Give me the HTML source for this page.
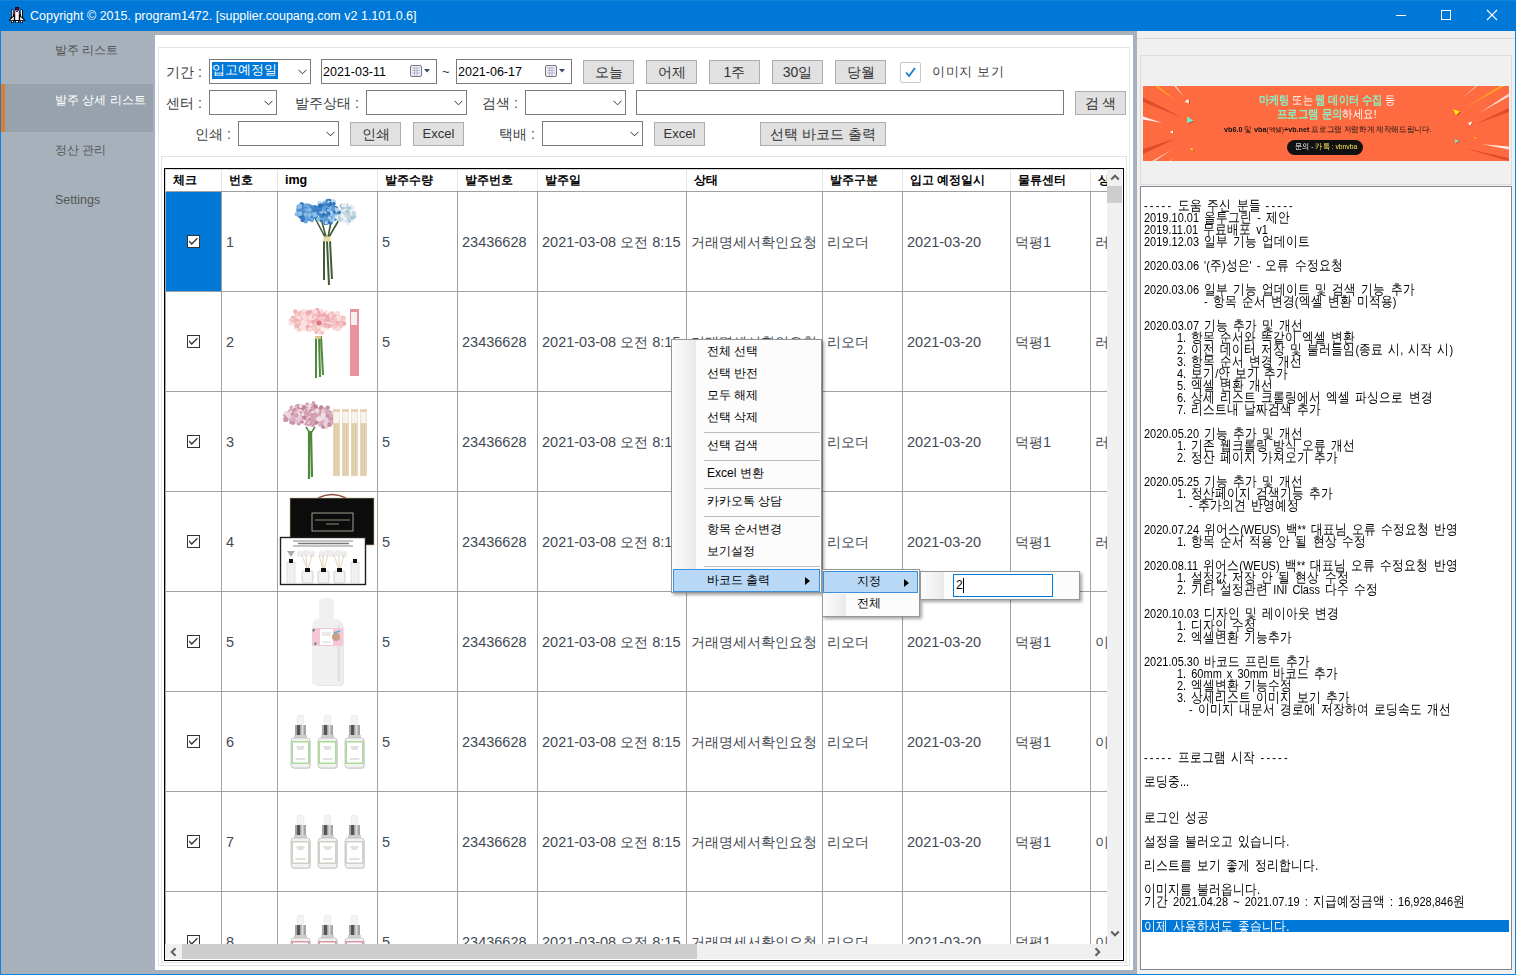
<!DOCTYPE html><html lang="ko"><head><meta charset="utf-8"><style>
*{margin:0;padding:0;box-sizing:border-box}
html,body{width:1516px;height:975px;overflow:hidden;background:#a7b1bb}
body{position:relative;font-family:"Liberation Sans",sans-serif;font-size:14px;color:#222}
body div{position:absolute}
.t{white-space:pre;line-height:1}
.btn{background:#e1e1e1;border:1px solid #adadad;color:#333;text-align:center}
.cmb{background:#fff;border:1px solid #7a7a7a}
.chev{width:7px;height:7px;border-right:1px solid #444;border-bottom:1px solid #444;transform:rotate(45deg)}
</style></head><body>
<div style="left:0px;top:0px;width:1516px;height:31px;background:#0078d7"></div>
<div style="left:0px;top:0px;width:1516px;height:1px;background:#1281d8"></div>
<div style="left:0px;top:31px;width:1px;height:944px;background:#1281d8"></div>
<div style="left:1515px;top:31px;width:1px;height:944px;background:#1281d8"></div>
<div style="left:0px;top:974px;width:1516px;height:1px;background:#1281d8"></div>
<svg style="position:absolute;left:6px;top:4px" width="22" height="22" viewBox="6 4 22 22">
<path d="M9 20.5L11 17V9.5h2.2V14H15V8h4v6h1.8V9.5H23V17l2 3.5V21H9z" fill="#000"/>
<rect x="15" y="7" width="4" height="3" fill="#000"/>
<rect x="15.5" y="8" width="3" height="1.6" fill="#8b0000"/>
<rect x="11.8" y="10" width="1" height="6.5" fill="#fff"/>
<rect x="21" y="10" width="1" height="6.5" fill="#fff"/>
<rect x="14" y="11" width="1" height="4" fill="#a00000"/>
<rect x="19" y="11" width="1" height="4" fill="#a00000"/>
<path d="M15.2 10.5h3.6V20h-3.6z" fill="#fff"/>
<rect x="16" y="11" width="2" height="0.9" fill="#1010e0"/>
<path d="M10 20.2L13.8 16.5V20.2z" fill="#fff"/>
<path d="M24 20.2L20.2 16.5V20.2z" fill="#fff"/>
<rect x="11" y="20.5" width="3" height="2.5" fill="#000"/><rect x="11.8" y="21" width="1.4" height="1.3" fill="#fff"/>
<rect x="15.3" y="20.5" width="3.4" height="2.5" fill="#000"/><rect x="16" y="21" width="2" height="1.3" fill="#fff"/>
<rect x="20" y="20.5" width="3" height="2.5" fill="#000"/><rect x="20.8" y="21" width="1.4" height="1.3" fill="#fff"/>
</svg>
<div class="t" style="left:30px;top:10px;color:#fff;font-size:12.5px">Copyright © 2015. program1472. [supplier.coupang.com v2 1.101.0.6]</div>
<div style="left:1396px;top:15px;width:10px;height:1px;background:#fff"></div>
<div style="left:1441px;top:10px;width:10px;height:10px;border:1px solid #fff"></div>
<svg style="position:absolute;left:1486px;top:9px" width="12" height="12" viewBox="0 0 12 12"><path d="M1 1L11 11M11 1L1 11" stroke="#fff" stroke-width="1.1"/></svg>
<div style="left:1px;top:84px;width:152px;height:48px;background:#98a2ac"></div>
<div style="left:1px;top:84px;width:4px;height:48px;background:#e07b2a"></div>
<div class="t" style="left:55px;top:44px;color:#555;font-size:12px">발주 리스트</div>
<div class="t" style="left:55px;top:94px;color:#fff;font-size:12px">발주 상세 리스트</div>
<div class="t" style="left:55px;top:144px;color:#555;font-size:12px">정산 관리</div>
<div class="t" style="left:55px;top:194px;color:#555;font-size:12.5px">Settings</div>
<div style="left:155px;top:35px;width:978px;height:935px;background:#fff"></div>
<div style="left:158px;top:47px;width:972px;height:919px;border:1px solid #e3e3e3"></div>
<div style="left:161px;top:156px;width:966px;height:807px;border:1px solid #e3e3e3"></div>
<div class="t" style="left:166px;top:65px;color:#3a3f47;font-size:14px">기간 :</div>
<div style="left:209px;top:59px;width:102px;height:25px;background:#fff;border:1px solid #7a7a7a"></div>
<svg style="position:absolute;left:298px;top:69px" width="9" height="6" viewBox="0 0 9 6"><path d="M.5 .8L4.5 4.8 8.5 .8" fill="none" stroke="#333" stroke-width="1"/></svg>
<div style="left:212px;top:62px;width:66px;height:17px;background:#0078d7"></div>
<div class="t" style="left:212px;top:63px;color:#fff;font-size:13px">입고예정일</div>
<div style="left:321px;top:59px;width:116px;height:25px;background:#fff;border:1px solid #7a7a7a"></div>
<div class="t" style="left:323px;top:66px;color:#000;font-size:12.5px">2021-03-11</div>
<svg style="position:absolute;left:410px;top:65px" width="21" height="13" viewBox="0 0 21 13"><rect x="0.5" y="0.5" width="11" height="11" rx="1.5" fill="#eef" stroke="#777"/><path d="M2 3h8M2 5.5h8M2 8h8M4.5 2v9M7 2v9" stroke="#99a" stroke-width=".6"/><path d="M14 4h6l-3 3.5z" fill="#3a4a6a"/></svg>
<div class="t" style="left:442px;top:65px;color:#333;font-size:13px">~</div>
<div style="left:456px;top:59px;width:116px;height:25px;background:#fff;border:1px solid #7a7a7a"></div>
<div class="t" style="left:458px;top:66px;color:#000;font-size:12.5px">2021-06-17</div>
<svg style="position:absolute;left:545px;top:65px" width="21" height="13" viewBox="0 0 21 13"><rect x="0.5" y="0.5" width="11" height="11" rx="1.5" fill="#eef" stroke="#777"/><path d="M2 3h8M2 5.5h8M2 8h8M4.5 2v9M7 2v9" stroke="#99a" stroke-width=".6"/><path d="M14 4h6l-3 3.5z" fill="#3a4a6a"/></svg>
<div class="btn" style="left:583px;top:60px;width:51px;height:24px;font-size:14px;line-height:22px">오늘</div>
<div class="btn" style="left:646px;top:60px;width:51px;height:24px;font-size:14px;line-height:22px">어제</div>
<div class="btn" style="left:709px;top:60px;width:51px;height:24px;font-size:14px;line-height:22px">1주</div>
<div class="btn" style="left:772px;top:60px;width:51px;height:24px;font-size:14px;line-height:22px">30일</div>
<div class="btn" style="left:835px;top:60px;width:51px;height:24px;font-size:14px;line-height:22px">당월</div>
<div style="left:900px;top:62px;width:21px;height:21px;background:#fff;border:1px solid #c8c8c8;border-radius:2px"></div>
<svg style="position:absolute;left:903px;top:65px" width="15" height="15" viewBox="0 0 15 15"><path d="M3 7.5l3 3.5 6-8" fill="none" stroke="#1a7fd4" stroke-width="1.8"/></svg>
<div class="t" style="left:932px;top:65px;color:#444;font-size:13px;letter-spacing:0.7px">이미지 보기</div>
<div class="t" style="left:166px;top:96px;color:#3a3f47;font-size:14px">센터 :</div>
<div style="left:209px;top:90px;width:68px;height:25px;background:#fff;border:1px solid #7a7a7a"></div>
<svg style="position:absolute;left:264px;top:100px" width="9" height="6" viewBox="0 0 9 6"><path d="M.5 .8L4.5 4.8 8.5 .8" fill="none" stroke="#333" stroke-width="1"/></svg>
<div class="t" style="left:295px;top:96px;color:#3a3f47;font-size:14px">발주상태 :</div>
<div style="left:366px;top:90px;width:101px;height:25px;background:#fff;border:1px solid #7a7a7a"></div>
<svg style="position:absolute;left:454px;top:100px" width="9" height="6" viewBox="0 0 9 6"><path d="M.5 .8L4.5 4.8 8.5 .8" fill="none" stroke="#333" stroke-width="1"/></svg>
<div class="t" style="left:482px;top:96px;color:#3a3f47;font-size:14px">검색 :</div>
<div style="left:525px;top:90px;width:101px;height:25px;background:#fff;border:1px solid #7a7a7a"></div>
<svg style="position:absolute;left:613px;top:100px" width="9" height="6" viewBox="0 0 9 6"><path d="M.5 .8L4.5 4.8 8.5 .8" fill="none" stroke="#333" stroke-width="1"/></svg>
<div style="left:636px;top:90px;width:428px;height:25px;background:#fff;border:1px solid #7a7a7a"></div>
<div class="btn" style="left:1075px;top:91px;width:51px;height:24px;font-size:14px;line-height:22px">검 색</div>
<div class="t" style="left:195px;top:127px;color:#3a3f47;font-size:14px">인쇄 :</div>
<div style="left:238px;top:121px;width:101px;height:25px;background:#fff;border:1px solid #7a7a7a"></div>
<svg style="position:absolute;left:326px;top:131px" width="9" height="6" viewBox="0 0 9 6"><path d="M.5 .8L4.5 4.8 8.5 .8" fill="none" stroke="#333" stroke-width="1"/></svg>
<div class="btn" style="left:350px;top:122px;width:51px;height:24px;font-size:14px;line-height:22px">인쇄</div>
<div class="btn" style="left:413px;top:122px;width:51px;height:24px;font-size:13px;line-height:22px">Excel</div>
<div class="t" style="left:499px;top:127px;color:#3a3f47;font-size:14px">택배 :</div>
<div style="left:542px;top:121px;width:101px;height:25px;background:#fff;border:1px solid #7a7a7a"></div>
<svg style="position:absolute;left:630px;top:131px" width="9" height="6" viewBox="0 0 9 6"><path d="M.5 .8L4.5 4.8 8.5 .8" fill="none" stroke="#333" stroke-width="1"/></svg>
<div class="btn" style="left:654px;top:122px;width:51px;height:24px;font-size:13px;line-height:22px">Excel</div>
<div class="btn" style="left:760px;top:122px;width:126px;height:24px;font-size:14px;line-height:22px">선택 바코드 출력</div>
<div style="left:164px;top:168px;width:960px;height:793px;border:1px solid #000;background:#fff"></div>
<div style="left:165px;top:169px;width:942px;height:775px;overflow:hidden">
<div class="t" style="left:8px;top:5px;font-size:12.5px;font-weight:bold;color:#000"><span style="font-size:11.7px">체크</span></div>
<div style="left:56px;top:0;width:1px;height:22px;background:#e5e5e5"></div>
<div style="left:56px;top:22px;width:1px;height:760px;background:#a0a0a0"></div>
<div class="t" style="left:64px;top:5px;font-size:12.5px;font-weight:bold;color:#000"><span style="font-size:11.7px">번호</span></div>
<div style="left:112px;top:0;width:1px;height:22px;background:#e5e5e5"></div>
<div style="left:112px;top:22px;width:1px;height:760px;background:#a0a0a0"></div>
<div class="t" style="left:120px;top:5px;font-size:12.5px;font-weight:bold;color:#000">img</div>
<div style="left:212px;top:0;width:1px;height:22px;background:#e5e5e5"></div>
<div style="left:212px;top:22px;width:1px;height:760px;background:#a0a0a0"></div>
<div class="t" style="left:220px;top:5px;font-size:12.5px;font-weight:bold;color:#000"><span style="font-size:11.7px">발주수량</span></div>
<div style="left:292px;top:0;width:1px;height:22px;background:#e5e5e5"></div>
<div style="left:292px;top:22px;width:1px;height:760px;background:#a0a0a0"></div>
<div class="t" style="left:300px;top:5px;font-size:12.5px;font-weight:bold;color:#000"><span style="font-size:11.7px">발주번호</span></div>
<div style="left:372px;top:0;width:1px;height:22px;background:#e5e5e5"></div>
<div style="left:372px;top:22px;width:1px;height:760px;background:#a0a0a0"></div>
<div class="t" style="left:380px;top:5px;font-size:12.5px;font-weight:bold;color:#000"><span style="font-size:11.7px">발주일</span></div>
<div style="left:521px;top:0;width:1px;height:22px;background:#e5e5e5"></div>
<div style="left:521px;top:22px;width:1px;height:760px;background:#a0a0a0"></div>
<div class="t" style="left:529px;top:5px;font-size:12.5px;font-weight:bold;color:#000"><span style="font-size:11.7px">상태</span></div>
<div style="left:657px;top:0;width:1px;height:22px;background:#e5e5e5"></div>
<div style="left:657px;top:22px;width:1px;height:760px;background:#a0a0a0"></div>
<div class="t" style="left:665px;top:5px;font-size:12.5px;font-weight:bold;color:#000"><span style="font-size:11.7px">발주구분</span></div>
<div style="left:737px;top:0;width:1px;height:22px;background:#e5e5e5"></div>
<div style="left:737px;top:22px;width:1px;height:760px;background:#a0a0a0"></div>
<div class="t" style="left:745px;top:5px;font-size:12.5px;font-weight:bold;color:#000"><span style="font-size:11.7px">입고</span> <span style="font-size:11.7px">예정일시</span></div>
<div style="left:845px;top:0;width:1px;height:22px;background:#e5e5e5"></div>
<div style="left:845px;top:22px;width:1px;height:760px;background:#a0a0a0"></div>
<div class="t" style="left:853px;top:5px;font-size:12.5px;font-weight:bold;color:#000"><span style="font-size:11.7px">물류센터</span></div>
<div style="left:925px;top:0;width:1px;height:22px;background:#e5e5e5"></div>
<div style="left:925px;top:22px;width:1px;height:760px;background:#a0a0a0"></div>
<div class="t" style="left:933px;top:5px;font-size:12.5px;font-weight:bold;color:#000"><span style="font-size:11.7px">상태</span></div>
<div style="left:0;top:22px;width:942px;height:1px;background:#a0a0a0"></div>
<div style="left:0;top:23px;width:56px;height:99px;background:#0078d7"></div>
<div style="left:0;top:122px;width:942px;height:1px;background:#a0a0a0"></div>
<div style="left:22px;top:66px;width:13px;height:13px;border:1px solid #333;background:#fff"></div>
<svg style="position:absolute;left:24px;top:68px" width="10" height="10" viewBox="0 0 10 10"><path d="M0 4L2.7 7 8.4 1.2" fill="none" stroke="#333" stroke-width="1.3"/></svg>
<div class="t" style="left:61px;top:66px;font-size:14.5px;color:#434a54">1</div>
<div class="t" style="left:217px;top:66px;font-size:14.5px;color:#434a54">5</div>
<div class="t" style="left:297px;top:66px;font-size:14.5px;color:#434a54">23436628</div>
<div class="t" style="left:377px;top:66px;font-size:14.5px;color:#434a54">2021-03-08 <span style="font-size:13.6px">오전</span> 8:15</div>
<div class="t" style="left:526px;top:66px;font-size:14.5px;color:#434a54"><span style="font-size:13.6px">거래명세서확인요청</span></div>
<div class="t" style="left:662px;top:66px;font-size:14.5px;color:#434a54"><span style="font-size:13.6px">리오더</span></div>
<div class="t" style="left:742px;top:66px;font-size:14.5px;color:#434a54">2021-03-20</div>
<div class="t" style="left:850px;top:66px;font-size:14.5px;color:#434a54"><span style="font-size:13.6px">덕평</span>1</div>
<div class="t" style="left:930px;top:66px;font-size:14.5px;color:#434a54"><span style="font-size:13.6px">러</span></div>
<div style="left:112px;top:22px;width:100px;height:100px"><svg width="100" height="100" viewBox="0 0 100 100"><defs><filter id="bl" x="-20%" y="-20%" width="140%" height="140%"><feGaussianBlur stdDeviation=".45"/></filter></defs><path d="M38 27L48 46M45 31L49 46M54 31L51 46M63 27L52 46" stroke="#3d5a34" stroke-width="1.6"/><path d="M47 50L47 89M50 50L52 94M53 50L55 88" stroke="#415d38" stroke-width="2"/><rect x="46.5" y="45.5" width="7" height="5" fill="#e6d9a3"/><g filter="url(#bl)"><circle cx="69" cy="23" r="7.6000000000000005" fill="#c3d9e2"/><circle cx="69.5" cy="29.6" r="2.5" fill="#a9c7d3"/><circle cx="61.9" cy="24.1" r="2.5" fill="#c3d9e2"/><circle cx="62.1" cy="24.3" r="2.6" fill="#dbe9ee"/><circle cx="60.5" cy="24.5" r="1.8" fill="#e8f1f4"/><circle cx="71.9" cy="19.7" r="2.4" fill="#dbe9ee"/><circle cx="60.9" cy="21.9" r="1.4" fill="#c3d9e2"/><circle cx="70.9" cy="22.5" r="2.4" fill="#c3d9e2"/><circle cx="68.1" cy="29.9" r="2.2" fill="#e8f1f4"/><circle cx="74.3" cy="20.3" r="2.5" fill="#e8f1f4"/><circle cx="72.8" cy="27.1" r="1.4" fill="#c3d9e2"/><circle cx="70.9" cy="31.7" r="2.3" fill="#e8f1f4"/><circle cx="72.8" cy="18.4" r="2.0" fill="#e8f1f4"/><circle cx="63.1" cy="21.8" r="2.5" fill="#dbe9ee"/><circle cx="65.2" cy="15.1" r="2.6" fill="#a9c7d3"/><circle cx="67.2" cy="19.8" r="2.6" fill="#a9c7d3"/><circle cx="74.9" cy="19.2" r="2.1" fill="#dbe9ee"/><circle cx="73.9" cy="22.6" r="1.3" fill="#c3d9e2"/><circle cx="74.7" cy="15.9" r="1.7" fill="#c3d9e2"/><circle cx="77.2" cy="26.5" r="1.6" fill="#c3d9e2"/><circle cx="70.0" cy="14.6" r="2.0" fill="#c3d9e2"/><circle cx="69.4" cy="17.5" r="2.0" fill="#a9c7d3"/><circle cx="73.4" cy="20.8" r="2.6" fill="#dbe9ee"/><circle cx="68.0" cy="25.3" r="2.5" fill="#c3d9e2"/><circle cx="74.0" cy="22.1" r="1.4" fill="#a9c7d3"/><circle cx="77.5" cy="25.2" r="1.7" fill="#a9c7d3"/><circle cx="74.7" cy="29.4" r="1.8" fill="#e8f1f4"/><circle cx="61.4" cy="22.1" r="2.1" fill="#c3d9e2"/><circle cx="75.3" cy="20.7" r="2.1" fill="#e8f1f4"/><circle cx="67.0" cy="14.5" r="2.6" fill="#e8f1f4"/><circle cx="62.0" cy="22.1" r="2.3" fill="#c3d9e2"/><circle cx="74.3" cy="22.6" r="2.1" fill="#e8f1f4"/><circle cx="67.4" cy="21.4" r="1.9" fill="#a9c7d3"/><circle cx="66.6" cy="18.2" r="2.2" fill="#a9c7d3"/><circle cx="71.3" cy="23.3" r="2.5" fill="#c3d9e2"/><circle cx="69.0" cy="29.1" r="1.4" fill="#a9c7d3"/><circle cx="72.3" cy="30.2" r="1.6" fill="#a9c7d3"/><circle cx="63.0" cy="28.5" r="2.6" fill="#c3d9e2"/><circle cx="67.6" cy="20.0" r="2.1" fill="#dbe9ee"/><circle cx="68.3" cy="28.1" r="2.1" fill="#e8f1f4"/><circle cx="75.0" cy="27.0" r="2.1" fill="#a9c7d3"/><circle cx="70.4" cy="31.0" r="1.3" fill="#dbe9ee"/><circle cx="68.8" cy="18.8" r="1.6" fill="#e8f1f4"/><circle cx="69.4" cy="21.4" r="1.6" fill="#dbe9ee"/><circle cx="72.7" cy="17.1" r="1.7" fill="#a9c7d3"/><circle cx="70.3" cy="20.7" r="2.0" fill="#a9c7d3"/><circle cx="63.0" cy="26.1" r="1.9" fill="#a9c7d3"/><circle cx="65.6" cy="19.4" r="1.2" fill="#e8f1f4"/><circle cx="65.4" cy="25.1" r="2.5" fill="#e8f1f4"/><circle cx="75.9" cy="16.9" r="2.0" fill="#e8f1f4"/><circle cx="77.0" cy="22.3" r="2.2" fill="#c3d9e2"/></g><g filter="url(#bl)"><circle cx="30" cy="21" r="8.4" fill="#4a8ccc"/><circle cx="30.3" cy="24.2" r="1.9" fill="#8dbde6"/><circle cx="31.2" cy="21.8" r="2.3" fill="#3577bd"/><circle cx="30.5" cy="16.3" r="1.6" fill="#3577bd"/><circle cx="31.6" cy="23.9" r="2.5" fill="#6aa7dc"/><circle cx="38.3" cy="22.3" r="2.3" fill="#3577bd"/><circle cx="32.0" cy="26.2" r="1.3" fill="#3577bd"/><circle cx="23.2" cy="16.0" r="1.4" fill="#6aa7dc"/><circle cx="26.9" cy="21.5" r="1.2" fill="#3577bd"/><circle cx="27.7" cy="29.1" r="2.4" fill="#3577bd"/><circle cx="23.3" cy="20.7" r="1.8" fill="#3577bd"/><circle cx="33.1" cy="25.7" r="1.3" fill="#4a8ccc"/><circle cx="19.8" cy="23.3" r="2.2" fill="#8dbde6"/><circle cx="35.3" cy="27.5" r="1.8" fill="#4a8ccc"/><circle cx="32.4" cy="28.6" r="1.5" fill="#3577bd"/><circle cx="22.6" cy="24.0" r="2.5" fill="#6aa7dc"/><circle cx="32.1" cy="22.5" r="1.6" fill="#6aa7dc"/><circle cx="21.5" cy="16.4" r="1.7" fill="#4a8ccc"/><circle cx="33.1" cy="27.1" r="1.7" fill="#4a8ccc"/><circle cx="39.0" cy="25.9" r="2.2" fill="#3577bd"/><circle cx="31.4" cy="20.7" r="1.7" fill="#3577bd"/><circle cx="34.9" cy="27.6" r="1.6" fill="#4a8ccc"/><circle cx="32.5" cy="27.2" r="1.6" fill="#6aa7dc"/><circle cx="26.6" cy="18.7" r="1.7" fill="#4a8ccc"/><circle cx="23.9" cy="22.7" r="2.6" fill="#3577bd"/><circle cx="23.7" cy="18.1" r="1.8" fill="#6aa7dc"/><circle cx="30.7" cy="23.3" r="2.2" fill="#4a8ccc"/><circle cx="21.5" cy="15.4" r="2.0" fill="#4a8ccc"/><circle cx="24.8" cy="18.2" r="1.4" fill="#4a8ccc"/><circle cx="20.9" cy="19.4" r="2.1" fill="#8dbde6"/><circle cx="31.5" cy="25.3" r="1.8" fill="#8dbde6"/><circle cx="36.6" cy="22.5" r="2.1" fill="#6aa7dc"/><circle cx="25.6" cy="23.0" r="1.2" fill="#6aa7dc"/><circle cx="29.9" cy="25.9" r="2.3" fill="#6aa7dc"/><circle cx="25.3" cy="23.5" r="1.3" fill="#3577bd"/><circle cx="37.1" cy="17.7" r="2.5" fill="#8dbde6"/><circle cx="24.4" cy="13.4" r="1.9" fill="#4a8ccc"/><circle cx="34.0" cy="23.5" r="1.7" fill="#6aa7dc"/><circle cx="24.8" cy="13.6" r="2.3" fill="#3577bd"/><circle cx="21.6" cy="19.6" r="1.7" fill="#3577bd"/><circle cx="24.2" cy="25.4" r="2.5" fill="#3577bd"/><circle cx="28.9" cy="19.2" r="2.3" fill="#6aa7dc"/><circle cx="28.8" cy="30.2" r="2.2" fill="#6aa7dc"/><circle cx="23.0" cy="22.5" r="2.5" fill="#8dbde6"/><circle cx="30.1" cy="21.6" r="1.2" fill="#6aa7dc"/><circle cx="32.5" cy="18.6" r="2.4" fill="#8dbde6"/><circle cx="20.7" cy="18.1" r="1.4" fill="#6aa7dc"/><circle cx="22.6" cy="15.3" r="2.5" fill="#8dbde6"/><circle cx="27.3" cy="22.0" r="1.9" fill="#4a8ccc"/><circle cx="35.4" cy="15.2" r="1.3" fill="#6aa7dc"/><circle cx="38.6" cy="25.5" r="1.6" fill="#4a8ccc"/><circle cx="28.4" cy="23.2" r="1.7" fill="#8dbde6"/><circle cx="31.4" cy="15.6" r="2.3" fill="#6aa7dc"/><circle cx="34.1" cy="16.0" r="1.4" fill="#4a8ccc"/><circle cx="22.8" cy="14.5" r="1.8" fill="#8dbde6"/><circle cx="28.3" cy="14.5" r="2.1" fill="#6aa7dc"/><circle cx="36.6" cy="18.1" r="2.3" fill="#4a8ccc"/><circle cx="34.9" cy="29.1" r="2.2" fill="#6aa7dc"/><circle cx="25.5" cy="29.2" r="2.0" fill="#3577bd"/><circle cx="37.3" cy="16.2" r="2.1" fill="#4a8ccc"/><circle cx="32.5" cy="23.3" r="1.9" fill="#8dbde6"/></g><g filter="url(#bl)"><circle cx="50" cy="20" r="10.0" fill="#5a9fd8"/><circle cx="42.3" cy="12.9" r="1.2" fill="#2f6fb8"/><circle cx="38.1" cy="22.5" r="2.5" fill="#5a9fd8"/><circle cx="56.5" cy="25.3" r="1.7" fill="#8cc0e8"/><circle cx="55.0" cy="23.5" r="1.8" fill="#8cc0e8"/><circle cx="54.8" cy="30.1" r="1.4" fill="#b8d8f0"/><circle cx="51.4" cy="15.8" r="1.8" fill="#2f6fb8"/><circle cx="58.3" cy="28.6" r="1.5" fill="#5a9fd8"/><circle cx="52.7" cy="31.5" r="1.6" fill="#8cc0e8"/><circle cx="58.9" cy="17.9" r="1.5" fill="#8cc0e8"/><circle cx="55.4" cy="19.0" r="1.6" fill="#b8d8f0"/><circle cx="46.7" cy="23.7" r="1.6" fill="#8cc0e8"/><circle cx="44.4" cy="29.3" r="1.2" fill="#2f6fb8"/><circle cx="46.8" cy="13.8" r="1.7" fill="#3d80c4"/><circle cx="46.4" cy="29.3" r="1.9" fill="#8cc0e8"/><circle cx="49.2" cy="17.3" r="2.5" fill="#5a9fd8"/><circle cx="45.0" cy="25.9" r="2.3" fill="#2f6fb8"/><circle cx="43.7" cy="26.7" r="1.8" fill="#5a9fd8"/><circle cx="47.4" cy="11.0" r="1.4" fill="#8cc0e8"/><circle cx="50.3" cy="30.7" r="1.7" fill="#b8d8f0"/><circle cx="44.5" cy="26.8" r="1.4" fill="#b8d8f0"/><circle cx="49.9" cy="9.4" r="1.3" fill="#3d80c4"/><circle cx="53.6" cy="18.8" r="1.9" fill="#3d80c4"/><circle cx="46.9" cy="23.5" r="2.5" fill="#3d80c4"/><circle cx="43.3" cy="18.1" r="1.6" fill="#3d80c4"/><circle cx="53.0" cy="11.0" r="2.6" fill="#3d80c4"/><circle cx="51.5" cy="22.2" r="1.9" fill="#2f6fb8"/><circle cx="44.9" cy="23.2" r="1.7" fill="#2f6fb8"/><circle cx="50.0" cy="29.6" r="1.3" fill="#8cc0e8"/><circle cx="52.0" cy="18.9" r="1.7" fill="#b8d8f0"/><circle cx="53.3" cy="31.3" r="2.5" fill="#2f6fb8"/><circle cx="42.4" cy="12.3" r="1.4" fill="#5a9fd8"/><circle cx="47.9" cy="22.1" r="1.6" fill="#b8d8f0"/><circle cx="38.0" cy="23.4" r="2.6" fill="#8cc0e8"/><circle cx="41.6" cy="22.4" r="1.9" fill="#3d80c4"/><circle cx="48.0" cy="27.3" r="1.4" fill="#8cc0e8"/><circle cx="54.0" cy="12.2" r="2.1" fill="#8cc0e8"/><circle cx="42.7" cy="20.0" r="1.9" fill="#5a9fd8"/><circle cx="40.8" cy="19.2" r="1.7" fill="#2f6fb8"/><circle cx="52.5" cy="9.8" r="2.1" fill="#2f6fb8"/><circle cx="50.5" cy="12.9" r="2.4" fill="#3d80c4"/><circle cx="48.8" cy="31.7" r="2.5" fill="#3d80c4"/><circle cx="47.2" cy="24.2" r="1.9" fill="#5a9fd8"/><circle cx="51.1" cy="13.3" r="1.8" fill="#3d80c4"/><circle cx="54.1" cy="11.3" r="1.7" fill="#3d80c4"/><circle cx="43.4" cy="12.0" r="1.7" fill="#b8d8f0"/><circle cx="56.4" cy="10.8" r="2.6" fill="#b8d8f0"/><circle cx="58.7" cy="17.7" r="2.6" fill="#2f6fb8"/><circle cx="52.4" cy="26.8" r="1.6" fill="#b8d8f0"/><circle cx="59.0" cy="24.6" r="1.4" fill="#b8d8f0"/><circle cx="51.8" cy="11.1" r="1.6" fill="#b8d8f0"/><circle cx="39.0" cy="16.4" r="2.2" fill="#3d80c4"/><circle cx="54.9" cy="20.8" r="2.1" fill="#b8d8f0"/><circle cx="54.6" cy="29.4" r="2.1" fill="#8cc0e8"/><circle cx="58.3" cy="22.1" r="1.4" fill="#8cc0e8"/><circle cx="53.2" cy="17.5" r="1.9" fill="#8cc0e8"/><circle cx="42.3" cy="17.7" r="1.7" fill="#3d80c4"/><circle cx="42.7" cy="14.1" r="2.2" fill="#8cc0e8"/><circle cx="44.8" cy="25.0" r="2.4" fill="#3d80c4"/><circle cx="56.9" cy="12.7" r="1.7" fill="#2f6fb8"/><circle cx="59.5" cy="22.1" r="1.6" fill="#5a9fd8"/><circle cx="37.8" cy="19.1" r="2.5" fill="#3d80c4"/><circle cx="53.4" cy="13.0" r="2.1" fill="#2f6fb8"/><circle cx="46.8" cy="23.3" r="1.7" fill="#2f6fb8"/><circle cx="44.5" cy="20.8" r="2.1" fill="#8cc0e8"/><circle cx="43.0" cy="29.0" r="1.7" fill="#5a9fd8"/><circle cx="44.5" cy="30.1" r="1.4" fill="#2f6fb8"/><circle cx="41.9" cy="11.9" r="1.8" fill="#b8d8f0"/><circle cx="58.7" cy="18.8" r="2.6" fill="#b8d8f0"/><circle cx="41.1" cy="28.0" r="2.0" fill="#8cc0e8"/><circle cx="49.2" cy="31.7" r="1.6" fill="#b8d8f0"/><circle cx="62.1" cy="21.4" r="1.9" fill="#3d80c4"/><circle cx="48.0" cy="28.0" r="2.1" fill="#5a9fd8"/><circle cx="56.0" cy="18.6" r="2.3" fill="#5a9fd8"/><circle cx="50.7" cy="18.8" r="2.0" fill="#2f6fb8"/><circle cx="50.4" cy="28.2" r="1.5" fill="#5a9fd8"/><circle cx="49.5" cy="24.6" r="1.6" fill="#3d80c4"/><circle cx="43.3" cy="14.9" r="2.4" fill="#2f6fb8"/><circle cx="51.3" cy="19.1" r="1.6" fill="#8cc0e8"/><circle cx="42.9" cy="18.6" r="2.2" fill="#3d80c4"/><circle cx="57.3" cy="21.2" r="1.4" fill="#2f6fb8"/></g></svg></div>
<div style="left:0;top:222px;width:942px;height:1px;background:#a0a0a0"></div>
<div style="left:22px;top:166px;width:13px;height:13px;border:1px solid #333;background:#fff"></div>
<svg style="position:absolute;left:24px;top:168px" width="10" height="10" viewBox="0 0 10 10"><path d="M0 4L2.7 7 8.4 1.2" fill="none" stroke="#333" stroke-width="1.3"/></svg>
<div class="t" style="left:61px;top:166px;font-size:14.5px;color:#434a54">2</div>
<div class="t" style="left:217px;top:166px;font-size:14.5px;color:#434a54">5</div>
<div class="t" style="left:297px;top:166px;font-size:14.5px;color:#434a54">23436628</div>
<div class="t" style="left:377px;top:166px;font-size:14.5px;color:#434a54">2021-03-08 <span style="font-size:13.6px">오전</span> 8:15</div>
<div class="t" style="left:526px;top:166px;font-size:14.5px;color:#434a54"><span style="font-size:13.6px">거래명세서확인요청</span></div>
<div class="t" style="left:662px;top:166px;font-size:14.5px;color:#434a54"><span style="font-size:13.6px">리오더</span></div>
<div class="t" style="left:742px;top:166px;font-size:14.5px;color:#434a54">2021-03-20</div>
<div class="t" style="left:850px;top:166px;font-size:14.5px;color:#434a54"><span style="font-size:13.6px">덕평</span>1</div>
<div class="t" style="left:930px;top:166px;font-size:14.5px;color:#434a54"><span style="font-size:13.6px">러</span></div>
<div style="left:112px;top:122px;width:100px;height:100px"><svg width="100" height="100" viewBox="0 0 100 100"><defs><filter id="bl" x="-20%" y="-20%" width="140%" height="140%"><feGaussianBlur stdDeviation=".45"/></filter></defs><path d="M39 45L39 87M42 45L43 86M44 45L46 84" stroke="#4e8a3a" stroke-width="2"/><rect x="38" y="45" width="6" height="3" fill="#d8c48a"/><g filter="url(#bl)"><circle cx="58" cy="30" r="7.6000000000000005" fill="#f5c5c3"/><circle cx="60.3" cy="22.1" r="2.3" fill="#f9dedd"/><circle cx="61.5" cy="30.8" r="1.9" fill="#efb0b0"/><circle cx="58.4" cy="24.5" r="1.6" fill="#f5c5c3"/><circle cx="60.6" cy="22.7" r="2.5" fill="#f9dedd"/><circle cx="55.2" cy="29.3" r="2.0" fill="#efb0b0"/><circle cx="59.7" cy="25.6" r="2.2" fill="#efb0b0"/><circle cx="61.1" cy="25.7" r="1.7" fill="#f5c5c3"/><circle cx="54.0" cy="32.4" r="1.3" fill="#efb0b0"/><circle cx="60.5" cy="36.8" r="1.3" fill="#f9dedd"/><circle cx="66.7" cy="32.4" r="2.5" fill="#efb0b0"/><circle cx="49.4" cy="30.7" r="1.9" fill="#f5c5c3"/><circle cx="53.1" cy="24.1" r="2.6" fill="#efb0b0"/><circle cx="63.6" cy="31.0" r="1.8" fill="#efb0b0"/><circle cx="55.9" cy="32.4" r="2.4" fill="#efb0b0"/><circle cx="54.8" cy="29.5" r="1.6" fill="#efb0b0"/><circle cx="56.9" cy="24.5" r="1.4" fill="#f5c5c3"/><circle cx="60.2" cy="38.1" r="1.9" fill="#efb0b0"/><circle cx="59.5" cy="33.4" r="1.7" fill="#efb0b0"/><circle cx="64.2" cy="26.0" r="1.7" fill="#f9dedd"/><circle cx="53.0" cy="29.2" r="2.6" fill="#efb0b0"/><circle cx="63.8" cy="31.9" r="2.6" fill="#efb0b0"/><circle cx="63.2" cy="33.4" r="2.4" fill="#f5c5c3"/><circle cx="53.7" cy="22.5" r="2.3" fill="#f9dedd"/><circle cx="56.1" cy="31.7" r="1.9" fill="#f9dedd"/><circle cx="56.3" cy="24.5" r="1.5" fill="#f5c5c3"/><circle cx="55.3" cy="24.5" r="2.3" fill="#efb0b0"/><circle cx="58.7" cy="31.2" r="1.6" fill="#f5c5c3"/><circle cx="59.3" cy="26.3" r="1.8" fill="#efb0b0"/><circle cx="62.3" cy="28.0" r="2.5" fill="#f9dedd"/><circle cx="52.2" cy="33.0" r="1.9" fill="#efb0b0"/><circle cx="54.5" cy="30.5" r="1.9" fill="#f9dedd"/><circle cx="53.7" cy="25.4" r="2.1" fill="#f9dedd"/><circle cx="67.0" cy="28.4" r="2.2" fill="#f9dedd"/><circle cx="57.2" cy="37.2" r="2.2" fill="#f9dedd"/><circle cx="62.7" cy="36.9" r="1.2" fill="#efb0b0"/><circle cx="55.8" cy="30.7" r="2.1" fill="#f5c5c3"/><circle cx="50.9" cy="26.8" r="1.7" fill="#f9dedd"/><circle cx="66.1" cy="26.9" r="2.5" fill="#f5c5c3"/><circle cx="60.8" cy="33.9" r="1.8" fill="#f5c5c3"/><circle cx="59.7" cy="22.0" r="1.3" fill="#f9dedd"/><circle cx="58.7" cy="35.5" r="2.2" fill="#f5c5c3"/><circle cx="58.2" cy="35.1" r="2.1" fill="#f5c5c3"/><circle cx="60.5" cy="31.7" r="1.9" fill="#efb0b0"/><circle cx="57.6" cy="27.7" r="2.2" fill="#f5c5c3"/><circle cx="64.1" cy="35.9" r="1.4" fill="#f5c5c3"/><circle cx="54.7" cy="26.6" r="1.8" fill="#efb0b0"/><circle cx="55.1" cy="22.5" r="2.3" fill="#f5c5c3"/><circle cx="61.4" cy="38.1" r="2.3" fill="#f9dedd"/><circle cx="53.3" cy="31.5" r="2.0" fill="#efb0b0"/><circle cx="60.5" cy="25.7" r="1.6" fill="#f9dedd"/></g><g filter="url(#bl)"><circle cx="24" cy="29" r="8.8" fill="#f8cfcd"/><circle cx="22.1" cy="32.6" r="1.3" fill="#f0b5b5"/><circle cx="25.5" cy="26.1" r="1.3" fill="#f0b5b5"/><circle cx="21.9" cy="28.9" r="1.8" fill="#fbe3e2"/><circle cx="24.5" cy="36.7" r="2.4" fill="#f8cfcd"/><circle cx="27.7" cy="32.5" r="2.0" fill="#f0b5b5"/><circle cx="31.8" cy="32.0" r="2.6" fill="#f8cfcd"/><circle cx="33.8" cy="31.8" r="1.8" fill="#fbe3e2"/><circle cx="16.0" cy="27.0" r="2.3" fill="#f0b5b5"/><circle cx="27.5" cy="36.2" r="1.5" fill="#f0b5b5"/><circle cx="31.6" cy="34.1" r="1.3" fill="#f0b5b5"/><circle cx="26.5" cy="37.3" r="2.3" fill="#fbe3e2"/><circle cx="13.7" cy="31.2" r="1.6" fill="#fbe3e2"/><circle cx="26.5" cy="20.6" r="1.3" fill="#f8cfcd"/><circle cx="21.6" cy="36.0" r="2.2" fill="#fbe3e2"/><circle cx="21.4" cy="39.1" r="1.9" fill="#f8cfcd"/><circle cx="27.3" cy="34.3" r="1.8" fill="#fbe3e2"/><circle cx="27.0" cy="28.3" r="2.0" fill="#f0b5b5"/><circle cx="28.4" cy="24.9" r="1.7" fill="#f0b5b5"/><circle cx="14.2" cy="29.2" r="2.4" fill="#f8cfcd"/><circle cx="31.1" cy="26.5" r="1.3" fill="#f0b5b5"/><circle cx="23.3" cy="23.2" r="2.6" fill="#f0b5b5"/><circle cx="26.6" cy="24.0" r="2.4" fill="#fbe3e2"/><circle cx="17.9" cy="37.3" r="1.4" fill="#fbe3e2"/><circle cx="26.0" cy="30.7" r="1.4" fill="#fbe3e2"/><circle cx="24.1" cy="35.5" r="1.3" fill="#fbe3e2"/><circle cx="16.3" cy="31.4" r="2.3" fill="#f8cfcd"/><circle cx="27.8" cy="24.8" r="2.6" fill="#fbe3e2"/><circle cx="21.2" cy="23.1" r="1.4" fill="#f8cfcd"/><circle cx="26.4" cy="33.5" r="1.2" fill="#f8cfcd"/><circle cx="26.3" cy="25.1" r="1.2" fill="#fbe3e2"/><circle cx="18.2" cy="32.1" r="1.6" fill="#f0b5b5"/><circle cx="31.2" cy="35.9" r="2.1" fill="#f0b5b5"/><circle cx="23.5" cy="22.0" r="2.3" fill="#f0b5b5"/><circle cx="18.6" cy="33.1" r="1.9" fill="#f8cfcd"/><circle cx="20.1" cy="31.7" r="1.8" fill="#f8cfcd"/><circle cx="30.6" cy="34.2" r="1.2" fill="#f8cfcd"/><circle cx="26.0" cy="31.7" r="2.1" fill="#fbe3e2"/><circle cx="28.5" cy="31.0" r="1.4" fill="#fbe3e2"/><circle cx="23.9" cy="35.2" r="1.9" fill="#fbe3e2"/><circle cx="29.8" cy="33.8" r="1.9" fill="#fbe3e2"/><circle cx="22.4" cy="32.7" r="1.7" fill="#f0b5b5"/><circle cx="23.1" cy="38.5" r="1.9" fill="#f8cfcd"/><circle cx="27.0" cy="38.8" r="1.4" fill="#fbe3e2"/><circle cx="22.3" cy="28.5" r="1.6" fill="#f0b5b5"/><circle cx="21.9" cy="26.5" r="1.9" fill="#fbe3e2"/><circle cx="29.5" cy="25.6" r="1.9" fill="#f8cfcd"/><circle cx="25.1" cy="23.1" r="2.1" fill="#f8cfcd"/><circle cx="26.3" cy="20.2" r="2.3" fill="#f8cfcd"/><circle cx="27.9" cy="20.8" r="1.5" fill="#f8cfcd"/><circle cx="14.6" cy="29.4" r="2.3" fill="#f8cfcd"/><circle cx="19.2" cy="29.8" r="2.5" fill="#f0b5b5"/><circle cx="13.9" cy="32.3" r="2.5" fill="#fbe3e2"/><circle cx="20.6" cy="32.7" r="1.9" fill="#f8cfcd"/><circle cx="20.0" cy="35.2" r="2.4" fill="#f0b5b5"/><circle cx="15.2" cy="30.1" r="1.3" fill="#f0b5b5"/><circle cx="18.4" cy="20.6" r="2.3" fill="#f0b5b5"/><circle cx="19.4" cy="29.6" r="1.7" fill="#f0b5b5"/><circle cx="27.4" cy="19.2" r="1.8" fill="#fbe3e2"/><circle cx="23.9" cy="26.0" r="1.4" fill="#f8cfcd"/><circle cx="27.0" cy="31.9" r="2.3" fill="#fbe3e2"/></g><g filter="url(#bl)"><circle cx="41" cy="30" r="10.8" fill="#f6c4c3"/><circle cx="42.9" cy="42.4" r="1.5" fill="#fbdcda"/><circle cx="45.8" cy="31.3" r="1.8" fill="#fbdcda"/><circle cx="50.3" cy="31.7" r="1.9" fill="#fff0f0"/><circle cx="45.4" cy="40.9" r="1.9" fill="#f6c4c3"/><circle cx="41.6" cy="19.3" r="1.9" fill="#fff0f0"/><circle cx="50.8" cy="24.2" r="1.3" fill="#f0aab0"/><circle cx="44.3" cy="22.7" r="1.4" fill="#fff0f0"/><circle cx="47.1" cy="32.2" r="1.9" fill="#f6c4c3"/><circle cx="33.4" cy="20.2" r="2.0" fill="#fbdcda"/><circle cx="38.5" cy="29.4" r="1.4" fill="#fbdcda"/><circle cx="46.8" cy="23.3" r="1.6" fill="#fff0f0"/><circle cx="33.1" cy="39.4" r="1.4" fill="#fbdcda"/><circle cx="33.1" cy="24.4" r="2.2" fill="#f0aab0"/><circle cx="52.8" cy="26.4" r="1.6" fill="#fbdcda"/><circle cx="36.6" cy="35.4" r="2.3" fill="#f6c4c3"/><circle cx="49.0" cy="20.4" r="1.7" fill="#fbdcda"/><circle cx="47.1" cy="26.2" r="1.6" fill="#fbdcda"/><circle cx="33.7" cy="33.6" r="1.4" fill="#fff0f0"/><circle cx="36.6" cy="33.2" r="1.5" fill="#f6c4c3"/><circle cx="41.8" cy="23.0" r="2.3" fill="#f6c4c3"/><circle cx="32.0" cy="38.0" r="2.5" fill="#fff0f0"/><circle cx="47.5" cy="37.4" r="1.8" fill="#fff0f0"/><circle cx="34.8" cy="26.4" r="1.2" fill="#f6c4c3"/><circle cx="34.9" cy="20.4" r="1.4" fill="#f0aab0"/><circle cx="49.7" cy="26.5" r="2.6" fill="#fbdcda"/><circle cx="42.6" cy="30.6" r="1.7" fill="#fbdcda"/><circle cx="38.4" cy="26.3" r="1.7" fill="#f0aab0"/><circle cx="41.7" cy="29.8" r="1.5" fill="#fff0f0"/><circle cx="42.7" cy="28.4" r="1.4" fill="#fbdcda"/><circle cx="49.8" cy="28.4" r="1.5" fill="#f6c4c3"/><circle cx="43.0" cy="41.4" r="1.7" fill="#fbdcda"/><circle cx="49.9" cy="36.9" r="2.2" fill="#fbdcda"/><circle cx="37.0" cy="29.6" r="2.0" fill="#fff0f0"/><circle cx="44.7" cy="22.1" r="1.5" fill="#f6c4c3"/><circle cx="36.8" cy="31.4" r="2.2" fill="#f6c4c3"/><circle cx="39.4" cy="28.8" r="2.4" fill="#f0aab0"/><circle cx="27.8" cy="27.8" r="1.9" fill="#fbdcda"/><circle cx="37.2" cy="37.1" r="1.2" fill="#fbdcda"/><circle cx="31.2" cy="22.0" r="2.5" fill="#f0aab0"/><circle cx="47.3" cy="29.3" r="1.3" fill="#f0aab0"/><circle cx="30.8" cy="35.4" r="1.9" fill="#f0aab0"/><circle cx="31.7" cy="21.1" r="2.1" fill="#f0aab0"/><circle cx="48.3" cy="35.7" r="2.5" fill="#fff0f0"/><circle cx="45.3" cy="24.1" r="1.8" fill="#f0aab0"/><circle cx="31.4" cy="38.2" r="2.3" fill="#f0aab0"/><circle cx="34.6" cy="25.3" r="1.5" fill="#fff0f0"/><circle cx="45.2" cy="21.8" r="1.6" fill="#f6c4c3"/><circle cx="51.5" cy="34.6" r="2.6" fill="#f0aab0"/><circle cx="43.0" cy="20.0" r="2.6" fill="#f0aab0"/><circle cx="39.2" cy="41.5" r="1.6" fill="#f0aab0"/><circle cx="47.6" cy="24.7" r="1.5" fill="#f0aab0"/><circle cx="41.1" cy="39.1" r="1.5" fill="#fff0f0"/><circle cx="45.0" cy="20.9" r="1.7" fill="#fbdcda"/><circle cx="43.3" cy="18.8" r="1.3" fill="#fff0f0"/><circle cx="45.9" cy="38.5" r="2.5" fill="#fff0f0"/><circle cx="42.1" cy="25.4" r="2.2" fill="#fbdcda"/><circle cx="48.8" cy="34.5" r="2.5" fill="#f0aab0"/><circle cx="49.8" cy="35.5" r="1.6" fill="#f6c4c3"/><circle cx="53.6" cy="33.0" r="2.1" fill="#fbdcda"/><circle cx="32.8" cy="38.7" r="2.2" fill="#fbdcda"/><circle cx="34.8" cy="25.8" r="2.2" fill="#f0aab0"/><circle cx="44.4" cy="29.3" r="2.5" fill="#f6c4c3"/><circle cx="34.1" cy="24.6" r="1.6" fill="#fbdcda"/><circle cx="34.2" cy="35.4" r="1.3" fill="#f6c4c3"/><circle cx="42.3" cy="36.8" r="1.7" fill="#fbdcda"/><circle cx="45.1" cy="41.8" r="2.0" fill="#f6c4c3"/><circle cx="39.9" cy="18.4" r="1.6" fill="#f0aab0"/><circle cx="41.5" cy="39.1" r="2.0" fill="#f6c4c3"/><circle cx="53.4" cy="25.0" r="1.5" fill="#fbdcda"/><circle cx="42.1" cy="35.2" r="2.3" fill="#fbdcda"/><circle cx="52.8" cy="34.5" r="1.8" fill="#f0aab0"/><circle cx="50.5" cy="26.2" r="2.2" fill="#f0aab0"/><circle cx="50.4" cy="29.1" r="2.2" fill="#f0aab0"/><circle cx="42.1" cy="24.5" r="2.2" fill="#f0aab0"/><circle cx="36.2" cy="30.7" r="1.9" fill="#f0aab0"/><circle cx="50.7" cy="28.3" r="2.3" fill="#f0aab0"/><circle cx="33.3" cy="26.7" r="2.4" fill="#fbdcda"/><circle cx="38.1" cy="26.4" r="1.2" fill="#fff0f0"/><circle cx="47.5" cy="23.3" r="1.7" fill="#f0aab0"/><circle cx="37.6" cy="20.4" r="2.4" fill="#fbdcda"/></g><circle cx="42" cy="32" r="2.5" fill="#e0707f" filter="url(#bl)"/><rect x="73" y="18" width="9" height="67" fill="#e8939e"/><rect x="74" y="21" width="6" height="13" fill="#f6f0f0"/></svg></div>
<div style="left:0;top:322px;width:942px;height:1px;background:#a0a0a0"></div>
<div style="left:22px;top:266px;width:13px;height:13px;border:1px solid #333;background:#fff"></div>
<svg style="position:absolute;left:24px;top:268px" width="10" height="10" viewBox="0 0 10 10"><path d="M0 4L2.7 7 8.4 1.2" fill="none" stroke="#333" stroke-width="1.3"/></svg>
<div class="t" style="left:61px;top:266px;font-size:14.5px;color:#434a54">3</div>
<div class="t" style="left:217px;top:266px;font-size:14.5px;color:#434a54">5</div>
<div class="t" style="left:297px;top:266px;font-size:14.5px;color:#434a54">23436628</div>
<div class="t" style="left:377px;top:266px;font-size:14.5px;color:#434a54">2021-03-08 <span style="font-size:13.6px">오전</span> 8:15</div>
<div class="t" style="left:526px;top:266px;font-size:14.5px;color:#434a54"><span style="font-size:13.6px">거래명세서확인요청</span></div>
<div class="t" style="left:662px;top:266px;font-size:14.5px;color:#434a54"><span style="font-size:13.6px">리오더</span></div>
<div class="t" style="left:742px;top:266px;font-size:14.5px;color:#434a54">2021-03-20</div>
<div class="t" style="left:850px;top:266px;font-size:14.5px;color:#434a54"><span style="font-size:13.6px">덕평</span>1</div>
<div class="t" style="left:930px;top:266px;font-size:14.5px;color:#434a54"><span style="font-size:13.6px">러</span></div>
<div style="left:112px;top:222px;width:100px;height:100px"><svg width="100" height="100" viewBox="0 0 100 100"><defs><filter id="bl" x="-20%" y="-20%" width="140%" height="140%"><feGaussianBlur stdDeviation=".45"/></filter></defs><path d="M32 40L32 88M34 40L35 86" stroke="#4e8a3a" stroke-width="2.2"/><path d="M29 36L33 42M38 36L34 42" stroke="#4e8a3a" stroke-width="1.5"/><g filter="url(#bl)"><circle cx="48" cy="26" r="8.8" fill="#d8a9bb"/><circle cx="41.5" cy="27.5" r="1.5" fill="#d8a9bb"/><circle cx="45.2" cy="20.6" r="2.5" fill="#ecd0da"/><circle cx="55.2" cy="29.8" r="2.2" fill="#c48ea3"/><circle cx="47.4" cy="21.7" r="2.5" fill="#ecd0da"/><circle cx="44.0" cy="28.0" r="1.4" fill="#d8a9bb"/><circle cx="37.4" cy="25.6" r="1.3" fill="#c48ea3"/><circle cx="44.3" cy="17.4" r="2.5" fill="#d8a9bb"/><circle cx="49.5" cy="30.8" r="2.4" fill="#ecd0da"/><circle cx="49.5" cy="16.1" r="1.6" fill="#ecd0da"/><circle cx="49.8" cy="21.7" r="2.4" fill="#d8a9bb"/><circle cx="54.4" cy="28.2" r="1.4" fill="#ecd0da"/><circle cx="48.8" cy="34.9" r="2.5" fill="#d8a9bb"/><circle cx="57.6" cy="26.2" r="2.5" fill="#d8a9bb"/><circle cx="48.3" cy="26.9" r="1.4" fill="#d8a9bb"/><circle cx="54.8" cy="22.3" r="1.9" fill="#c48ea3"/><circle cx="54.3" cy="22.8" r="1.5" fill="#ecd0da"/><circle cx="48.9" cy="17.3" r="1.4" fill="#d8a9bb"/><circle cx="39.7" cy="19.5" r="1.6" fill="#d8a9bb"/><circle cx="43.9" cy="17.2" r="1.6" fill="#c48ea3"/><circle cx="59.0" cy="25.7" r="2.4" fill="#d8a9bb"/><circle cx="39.4" cy="31.7" r="2.1" fill="#d8a9bb"/><circle cx="54.4" cy="27.7" r="1.9" fill="#c48ea3"/><circle cx="39.6" cy="22.5" r="1.4" fill="#ecd0da"/><circle cx="52.9" cy="21.7" r="1.8" fill="#d8a9bb"/><circle cx="56.3" cy="25.3" r="1.7" fill="#d8a9bb"/><circle cx="47.8" cy="25.8" r="1.5" fill="#d8a9bb"/><circle cx="42.1" cy="28.1" r="1.6" fill="#d8a9bb"/><circle cx="46.3" cy="33.3" r="1.2" fill="#d8a9bb"/><circle cx="49.9" cy="16.8" r="1.7" fill="#ecd0da"/><circle cx="49.4" cy="18.3" r="1.8" fill="#d8a9bb"/><circle cx="49.3" cy="36.2" r="1.9" fill="#ecd0da"/><circle cx="55.9" cy="23.9" r="2.1" fill="#d8a9bb"/><circle cx="52.8" cy="34.4" r="1.2" fill="#ecd0da"/><circle cx="57.2" cy="22.5" r="2.5" fill="#ecd0da"/><circle cx="56.5" cy="25.3" r="1.3" fill="#d8a9bb"/><circle cx="38.7" cy="28.8" r="2.1" fill="#ecd0da"/><circle cx="54.4" cy="24.7" r="1.9" fill="#d8a9bb"/><circle cx="46.1" cy="36.1" r="2.0" fill="#c48ea3"/><circle cx="47.1" cy="23.5" r="1.4" fill="#ecd0da"/><circle cx="38.9" cy="22.5" r="2.4" fill="#c48ea3"/><circle cx="52.5" cy="33.7" r="2.4" fill="#c48ea3"/><circle cx="44.5" cy="26.1" r="1.6" fill="#d8a9bb"/><circle cx="54.8" cy="32.7" r="1.4" fill="#d8a9bb"/><circle cx="50.5" cy="16.6" r="1.4" fill="#d8a9bb"/><circle cx="40.1" cy="28.1" r="1.3" fill="#ecd0da"/><circle cx="39.9" cy="23.6" r="1.9" fill="#ecd0da"/><circle cx="49.7" cy="25.4" r="2.4" fill="#c48ea3"/><circle cx="40.3" cy="23.9" r="2.1" fill="#c48ea3"/><circle cx="50.9" cy="16.6" r="2.0" fill="#c48ea3"/><circle cx="45.1" cy="34.5" r="1.4" fill="#c48ea3"/><circle cx="54.3" cy="30.3" r="1.9" fill="#d8a9bb"/><circle cx="46.3" cy="24.2" r="1.2" fill="#c48ea3"/><circle cx="48.3" cy="33.1" r="2.4" fill="#ecd0da"/><circle cx="46.9" cy="17.8" r="1.3" fill="#d8a9bb"/><circle cx="40.9" cy="21.3" r="1.8" fill="#c48ea3"/><circle cx="45.3" cy="24.4" r="2.1" fill="#d8a9bb"/><circle cx="49.2" cy="28.4" r="2.1" fill="#ecd0da"/><circle cx="40.7" cy="23.9" r="2.3" fill="#c48ea3"/><circle cx="43.1" cy="34.0" r="1.8" fill="#d8a9bb"/><circle cx="44.0" cy="27.3" r="2.6" fill="#ecd0da"/></g><g filter="url(#bl)"><circle cx="18" cy="24" r="8.4" fill="#ddb1c2"/><circle cx="11.8" cy="21.2" r="1.2" fill="#c995aa"/><circle cx="10.8" cy="25.6" r="2.1" fill="#efd6df"/><circle cx="22.1" cy="30.1" r="1.3" fill="#efd6df"/><circle cx="26.7" cy="21.5" r="1.3" fill="#efd6df"/><circle cx="23.2" cy="18.0" r="1.8" fill="#efd6df"/><circle cx="20.5" cy="19.5" r="2.2" fill="#ddb1c2"/><circle cx="16.0" cy="20.9" r="2.6" fill="#ddb1c2"/><circle cx="16.3" cy="22.6" r="1.5" fill="#ddb1c2"/><circle cx="21.4" cy="32.9" r="1.7" fill="#c995aa"/><circle cx="22.7" cy="20.7" r="1.8" fill="#c995aa"/><circle cx="9.7" cy="25.5" r="2.4" fill="#efd6df"/><circle cx="20.8" cy="27.9" r="1.5" fill="#efd6df"/><circle cx="23.6" cy="25.1" r="2.1" fill="#c995aa"/><circle cx="8.5" cy="22.1" r="1.7" fill="#ddb1c2"/><circle cx="27.5" cy="20.8" r="1.4" fill="#ddb1c2"/><circle cx="18.5" cy="20.9" r="2.6" fill="#ddb1c2"/><circle cx="20.2" cy="29.5" r="1.8" fill="#efd6df"/><circle cx="16.3" cy="20.6" r="1.4" fill="#c995aa"/><circle cx="23.2" cy="28.6" r="2.1" fill="#ddb1c2"/><circle cx="22.1" cy="22.5" r="1.9" fill="#ddb1c2"/><circle cx="14.0" cy="29.4" r="2.0" fill="#ddb1c2"/><circle cx="27.6" cy="26.6" r="1.3" fill="#ddb1c2"/><circle cx="10.4" cy="26.4" r="2.5" fill="#efd6df"/><circle cx="8.1" cy="24.3" r="1.9" fill="#c995aa"/><circle cx="24.4" cy="20.2" r="1.9" fill="#c995aa"/><circle cx="22.3" cy="31.1" r="1.4" fill="#efd6df"/><circle cx="12.0" cy="22.5" r="1.9" fill="#efd6df"/><circle cx="21.5" cy="29.7" r="2.4" fill="#efd6df"/><circle cx="22.8" cy="19.2" r="1.3" fill="#ddb1c2"/><circle cx="20.9" cy="25.8" r="2.4" fill="#efd6df"/><circle cx="19.2" cy="20.5" r="2.3" fill="#efd6df"/><circle cx="23.4" cy="21.3" r="2.5" fill="#efd6df"/><circle cx="15.8" cy="17.9" r="1.9" fill="#c995aa"/><circle cx="9.1" cy="22.7" r="2.1" fill="#efd6df"/><circle cx="14.8" cy="16.6" r="2.0" fill="#c995aa"/><circle cx="16.9" cy="22.9" r="2.5" fill="#ddb1c2"/><circle cx="9.1" cy="27.7" r="1.6" fill="#c995aa"/><circle cx="24.9" cy="28.1" r="2.3" fill="#c995aa"/><circle cx="28.1" cy="21.7" r="1.4" fill="#efd6df"/><circle cx="11.8" cy="24.9" r="2.5" fill="#efd6df"/><circle cx="20.2" cy="29.5" r="2.0" fill="#ddb1c2"/><circle cx="8.7" cy="28.4" r="2.6" fill="#c995aa"/><circle cx="23.4" cy="19.6" r="2.3" fill="#c995aa"/><circle cx="22.2" cy="16.5" r="2.1" fill="#efd6df"/><circle cx="12.9" cy="22.2" r="1.4" fill="#efd6df"/><circle cx="18.2" cy="23.1" r="2.1" fill="#efd6df"/><circle cx="24.9" cy="17.4" r="1.5" fill="#c995aa"/><circle cx="19.3" cy="15.2" r="1.7" fill="#ddb1c2"/><circle cx="13.6" cy="29.0" r="2.1" fill="#ddb1c2"/><circle cx="16.2" cy="32.1" r="1.9" fill="#c995aa"/><circle cx="23.6" cy="20.5" r="1.7" fill="#c995aa"/><circle cx="16.9" cy="17.1" r="2.4" fill="#efd6df"/><circle cx="15.4" cy="22.5" r="2.2" fill="#c995aa"/><circle cx="20.1" cy="18.0" r="2.6" fill="#ddb1c2"/><circle cx="26.9" cy="23.6" r="2.0" fill="#ddb1c2"/><circle cx="17.4" cy="18.5" r="1.7" fill="#c995aa"/><circle cx="14.0" cy="31.7" r="1.7" fill="#c995aa"/><circle cx="13.9" cy="21.0" r="1.3" fill="#efd6df"/><circle cx="20.6" cy="14.7" r="2.0" fill="#ddb1c2"/><circle cx="24.1" cy="26.9" r="2.0" fill="#c995aa"/></g><g filter="url(#bl)"><circle cx="33" cy="24" r="11.200000000000001" fill="#d49fb3"/><circle cx="23.0" cy="26.9" r="1.8" fill="#f3e0e7"/><circle cx="36.7" cy="19.4" r="2.1" fill="#f3e0e7"/><circle cx="34.1" cy="20.1" r="1.4" fill="#bf8399"/><circle cx="20.2" cy="21.0" r="2.0" fill="#d49fb3"/><circle cx="25.5" cy="29.4" r="2.1" fill="#e8c4d2"/><circle cx="34.7" cy="21.1" r="1.5" fill="#d49fb3"/><circle cx="33.1" cy="26.3" r="1.7" fill="#f3e0e7"/><circle cx="27.8" cy="20.8" r="2.1" fill="#e8c4d2"/><circle cx="21.6" cy="24.0" r="2.1" fill="#f3e0e7"/><circle cx="24.3" cy="29.5" r="2.2" fill="#d49fb3"/><circle cx="30.3" cy="29.8" r="1.2" fill="#bf8399"/><circle cx="28.8" cy="22.3" r="2.4" fill="#d49fb3"/><circle cx="22.6" cy="32.5" r="1.5" fill="#d49fb3"/><circle cx="35.9" cy="22.7" r="2.6" fill="#f3e0e7"/><circle cx="30.0" cy="26.2" r="2.3" fill="#e8c4d2"/><circle cx="32.5" cy="27.9" r="1.2" fill="#bf8399"/><circle cx="21.6" cy="30.8" r="1.5" fill="#e8c4d2"/><circle cx="35.8" cy="25.9" r="1.4" fill="#f3e0e7"/><circle cx="24.3" cy="20.8" r="2.6" fill="#e8c4d2"/><circle cx="34.1" cy="15.5" r="1.4" fill="#f3e0e7"/><circle cx="27.3" cy="26.9" r="2.4" fill="#bf8399"/><circle cx="43.6" cy="22.4" r="1.5" fill="#d49fb3"/><circle cx="22.8" cy="31.6" r="1.3" fill="#d49fb3"/><circle cx="38.6" cy="31.0" r="2.3" fill="#d49fb3"/><circle cx="29.4" cy="30.4" r="1.3" fill="#d49fb3"/><circle cx="35.9" cy="34.3" r="2.0" fill="#d49fb3"/><circle cx="26.5" cy="30.5" r="2.4" fill="#f3e0e7"/><circle cx="38.7" cy="30.2" r="1.6" fill="#e8c4d2"/><circle cx="34.5" cy="34.3" r="1.4" fill="#e8c4d2"/><circle cx="25.8" cy="16.8" r="2.4" fill="#f3e0e7"/><circle cx="25.8" cy="18.8" r="1.4" fill="#d49fb3"/><circle cx="25.9" cy="23.5" r="1.6" fill="#f3e0e7"/><circle cx="37.8" cy="14.8" r="1.9" fill="#bf8399"/><circle cx="45.5" cy="18.3" r="1.5" fill="#e8c4d2"/><circle cx="21.0" cy="19.5" r="1.6" fill="#d49fb3"/><circle cx="38.5" cy="21.0" r="1.3" fill="#d49fb3"/><circle cx="27.1" cy="27.5" r="1.4" fill="#d49fb3"/><circle cx="25.8" cy="31.4" r="1.3" fill="#e8c4d2"/><circle cx="39.1" cy="30.8" r="2.1" fill="#bf8399"/><circle cx="29.1" cy="14.5" r="2.0" fill="#e8c4d2"/><circle cx="41.6" cy="19.8" r="2.2" fill="#bf8399"/><circle cx="35.0" cy="23.6" r="1.9" fill="#d49fb3"/><circle cx="32.0" cy="16.5" r="1.3" fill="#d49fb3"/><circle cx="21.5" cy="20.7" r="2.3" fill="#e8c4d2"/><circle cx="40.1" cy="20.0" r="2.5" fill="#f3e0e7"/><circle cx="39.2" cy="17.8" r="2.4" fill="#d49fb3"/><circle cx="23.1" cy="19.4" r="1.7" fill="#f3e0e7"/><circle cx="36.8" cy="24.3" r="2.1" fill="#d49fb3"/><circle cx="46.1" cy="23.5" r="1.7" fill="#bf8399"/><circle cx="32.0" cy="13.9" r="1.8" fill="#f3e0e7"/><circle cx="23.3" cy="21.5" r="1.6" fill="#d49fb3"/><circle cx="34.8" cy="25.0" r="1.9" fill="#d49fb3"/><circle cx="22.9" cy="15.6" r="2.5" fill="#bf8399"/><circle cx="29.4" cy="27.7" r="1.9" fill="#e8c4d2"/><circle cx="33.2" cy="16.2" r="1.9" fill="#f3e0e7"/><circle cx="33.5" cy="32.4" r="1.5" fill="#bf8399"/><circle cx="21.6" cy="29.0" r="2.4" fill="#e8c4d2"/><circle cx="25.0" cy="30.7" r="1.5" fill="#bf8399"/><circle cx="38.5" cy="29.9" r="2.2" fill="#d49fb3"/><circle cx="40.0" cy="21.8" r="1.4" fill="#e8c4d2"/><circle cx="19.7" cy="26.3" r="1.7" fill="#f3e0e7"/><circle cx="21.6" cy="22.6" r="1.6" fill="#f3e0e7"/><circle cx="36.5" cy="17.8" r="2.1" fill="#d49fb3"/><circle cx="31.4" cy="31.8" r="2.1" fill="#d49fb3"/><circle cx="28.0" cy="27.3" r="1.5" fill="#bf8399"/><circle cx="34.9" cy="26.2" r="1.8" fill="#d49fb3"/><circle cx="25.2" cy="16.2" r="2.5" fill="#bf8399"/><circle cx="30.5" cy="18.6" r="1.6" fill="#f3e0e7"/><circle cx="30.3" cy="12.7" r="1.5" fill="#d49fb3"/><circle cx="31.8" cy="31.7" r="1.8" fill="#e8c4d2"/><circle cx="36.5" cy="11.8" r="1.8" fill="#d49fb3"/><circle cx="39.8" cy="18.8" r="1.8" fill="#f3e0e7"/><circle cx="23.6" cy="15.0" r="2.0" fill="#f3e0e7"/><circle cx="27.3" cy="16.3" r="1.8" fill="#bf8399"/><circle cx="29.3" cy="19.1" r="1.5" fill="#d49fb3"/><circle cx="44.2" cy="16.3" r="2.0" fill="#bf8399"/><circle cx="35.0" cy="16.7" r="1.7" fill="#d49fb3"/><circle cx="41.1" cy="28.4" r="2.3" fill="#f3e0e7"/><circle cx="30.6" cy="24.2" r="1.8" fill="#d49fb3"/><circle cx="43.0" cy="26.1" r="1.9" fill="#e8c4d2"/><circle cx="46.3" cy="24.0" r="2.5" fill="#f3e0e7"/><circle cx="19.4" cy="24.6" r="2.3" fill="#d49fb3"/><circle cx="23.3" cy="27.7" r="1.9" fill="#e8c4d2"/><circle cx="38.8" cy="15.7" r="2.1" fill="#bf8399"/><circle cx="45.5" cy="20.5" r="1.6" fill="#e8c4d2"/><circle cx="39.5" cy="31.6" r="2.0" fill="#bf8399"/><circle cx="36.1" cy="33.3" r="2.0" fill="#d49fb3"/><circle cx="46.6" cy="26.3" r="2.0" fill="#f3e0e7"/><circle cx="37.9" cy="23.7" r="2.2" fill="#d49fb3"/><circle cx="42.4" cy="27.9" r="2.5" fill="#f3e0e7"/></g><rect x="56" y="18" width="7" height="67" fill="#e7d4b6"/><rect x="56.5" y="21" width="6" height="11" fill="#f7f4ef"/><path d="M58 33V84M60.5 33V84" stroke="#d4bc96" stroke-width=".6"/><rect x="65" y="18" width="7" height="67" fill="#e7d4b6"/><rect x="65.5" y="21" width="6" height="11" fill="#f7f4ef"/><path d="M67 33V84M69.5 33V84" stroke="#d4bc96" stroke-width=".6"/><rect x="74" y="18" width="7" height="67" fill="#e7d4b6"/><rect x="74.5" y="21" width="6" height="11" fill="#f7f4ef"/><path d="M76 33V84M78.5 33V84" stroke="#d4bc96" stroke-width=".6"/><rect x="83" y="18" width="7" height="67" fill="#e7d4b6"/><rect x="83.5" y="21" width="6" height="11" fill="#f7f4ef"/><path d="M85 33V84M87.5 33V84" stroke="#d4bc96" stroke-width=".6"/></svg></div>
<div style="left:0;top:422px;width:942px;height:1px;background:#a0a0a0"></div>
<div style="left:22px;top:366px;width:13px;height:13px;border:1px solid #333;background:#fff"></div>
<svg style="position:absolute;left:24px;top:368px" width="10" height="10" viewBox="0 0 10 10"><path d="M0 4L2.7 7 8.4 1.2" fill="none" stroke="#333" stroke-width="1.3"/></svg>
<div class="t" style="left:61px;top:366px;font-size:14.5px;color:#434a54">4</div>
<div class="t" style="left:217px;top:366px;font-size:14.5px;color:#434a54">5</div>
<div class="t" style="left:297px;top:366px;font-size:14.5px;color:#434a54">23436628</div>
<div class="t" style="left:377px;top:366px;font-size:14.5px;color:#434a54">2021-03-08 <span style="font-size:13.6px">오전</span> 8:15</div>
<div class="t" style="left:526px;top:366px;font-size:14.5px;color:#434a54"><span style="font-size:13.6px">거래명세서확인요청</span></div>
<div class="t" style="left:662px;top:366px;font-size:14.5px;color:#434a54"><span style="font-size:13.6px">리오더</span></div>
<div class="t" style="left:742px;top:366px;font-size:14.5px;color:#434a54">2021-03-20</div>
<div class="t" style="left:850px;top:366px;font-size:14.5px;color:#434a54"><span style="font-size:13.6px">덕평</span>1</div>
<div class="t" style="left:930px;top:366px;font-size:14.5px;color:#434a54"><span style="font-size:13.6px">러</span></div>
<div style="left:112px;top:322px;width:100px;height:100px"><svg width="100" height="100" viewBox="0 0 100 100"><defs><filter id="bl" x="-20%" y="-20%" width="140%" height="140%"><feGaussianBlur stdDeviation=".45"/></filter></defs><path d="M41 7Q55 0 69 7" fill="none" stroke="#8a4a3a" stroke-width="1.5"/><rect x="13" y="7" width="84" height="47" fill="#0c0c0c" stroke="#c8b88a" stroke-width=".6"/><rect x="35" y="22" width="41" height="18" fill="none" stroke="#b5ad9a" stroke-width=".9"/><path d="M38 29H73M49 33H62" stroke="#8d8777" stroke-width="1.2"/><rect x="3.5" y="46.5" width="85" height="47" fill="#fff" stroke="#1e1e1e" stroke-width="1.4"/><path d="M16 50H76M16 55H76" stroke="#555" stroke-width=".7"/><path d="M21 52.5H72" stroke="#777" stroke-width="1.6"/><path d="M10 60H18L14 66z" fill="#aaa"/><circle cx="23" cy="63" r="3.2" fill="#ececec"/><circle cx="29" cy="62" r="3.2" fill="#ececec"/><circle cx="35" cy="63" r="3.2" fill="#ececec"/><circle cx="45" cy="63" r="3.2" fill="#ececec"/><circle cx="51" cy="62" r="3.2" fill="#ececec"/><circle cx="55" cy="63" r="3.2" fill="#ececec"/><circle cx="61" cy="62" r="3.2" fill="#ececec"/><circle cx="67" cy="63" r="3.2" fill="#ececec"/><path d="M25 64L30 78M29 64L30 78M35 64L31 78M42 64L46 78M46 64L46 78M51 64L47 78M57 64L62 78M62 64L62 78M67 64L63 78" stroke="#cfb98e" stroke-width=".6"/><rect x="10" y="71" width="8" height="21" fill="#f0f0f0" stroke="#ccc" stroke-width=".5"/><rect x="12" y="68" width="4" height="4" fill="#111"/><rect x="74" y="71" width="8" height="21" fill="#f0f0f0" stroke="#ccc" stroke-width=".5"/><rect x="76" y="68" width="4" height="4" fill="#111"/><rect x="25" y="80" width="11" height="12" rx="1.5" fill="#f3f3f3" stroke="#bbb" stroke-width=".6"/><rect x="28" y="77" width="5" height="4" fill="#111"/><rect x="41" y="80" width="11" height="12" rx="1.5" fill="#f3f3f3" stroke="#bbb" stroke-width=".6"/><rect x="44" y="77" width="5" height="4" fill="#111"/><rect x="57" y="80" width="11" height="12" rx="1.5" fill="#f3f3f3" stroke="#bbb" stroke-width=".6"/><rect x="60" y="77" width="5" height="4" fill="#111"/></svg></div>
<div style="left:0;top:522px;width:942px;height:1px;background:#a0a0a0"></div>
<div style="left:22px;top:466px;width:13px;height:13px;border:1px solid #333;background:#fff"></div>
<svg style="position:absolute;left:24px;top:468px" width="10" height="10" viewBox="0 0 10 10"><path d="M0 4L2.7 7 8.4 1.2" fill="none" stroke="#333" stroke-width="1.3"/></svg>
<div class="t" style="left:61px;top:466px;font-size:14.5px;color:#434a54">5</div>
<div class="t" style="left:217px;top:466px;font-size:14.5px;color:#434a54">5</div>
<div class="t" style="left:297px;top:466px;font-size:14.5px;color:#434a54">23436628</div>
<div class="t" style="left:377px;top:466px;font-size:14.5px;color:#434a54">2021-03-08 <span style="font-size:13.6px">오전</span> 8:15</div>
<div class="t" style="left:526px;top:466px;font-size:14.5px;color:#434a54"><span style="font-size:13.6px">거래명세서확인요청</span></div>
<div class="t" style="left:662px;top:466px;font-size:14.5px;color:#434a54"><span style="font-size:13.6px">리오더</span></div>
<div class="t" style="left:742px;top:466px;font-size:14.5px;color:#434a54">2021-03-20</div>
<div class="t" style="left:850px;top:466px;font-size:14.5px;color:#434a54"><span style="font-size:13.6px">덕평</span>1</div>
<div class="t" style="left:930px;top:466px;font-size:14.5px;color:#434a54"><span style="font-size:13.6px">이</span></div>
<div style="left:112px;top:422px;width:100px;height:100px"><svg width="100" height="100" viewBox="0 0 100 100"><defs><filter id="bl" x="-20%" y="-20%" width="140%" height="140%"><feGaussianBlur stdDeviation=".45"/></filter></defs><rect x="42" y="7" width="15" height="22" rx="5" fill="#efefef"/><path d="M38 37Q38 29 47 28H56Q67 29 67 37V91Q67 95 62 95H42Q38 95 38 91z" fill="#e6e6e6" filter="url(#bl)"/><path d="M35 36Q35 28 44 27H55Q66 28 66 36V90Q66 94 61 94H39Q35 94 35 90z" fill="#f0f0f0"/><path d="M62 34V90" stroke="#e2e2e2" stroke-width="3"/><rect x="35" y="37" width="31" height="18" fill="#f4c6d6"/><rect x="43" y="38" width="13" height="16" fill="#fff"/><circle cx="59" cy="46" r="4" fill="#c9a184"/><path d="M57 42L63 40" stroke="#4cb8d0" stroke-width="1.5"/><path d="M35 39L38 38L37 41z" fill="#2e8a4a"/><path d="M38 51L40 53L37 54z" fill="#2e8a4a"/><path d="M45 42H54M45 44H54M45 51H54" stroke="#aaa" stroke-width=".5"/></svg></div>
<div style="left:0;top:622px;width:942px;height:1px;background:#a0a0a0"></div>
<div style="left:22px;top:566px;width:13px;height:13px;border:1px solid #333;background:#fff"></div>
<svg style="position:absolute;left:24px;top:568px" width="10" height="10" viewBox="0 0 10 10"><path d="M0 4L2.7 7 8.4 1.2" fill="none" stroke="#333" stroke-width="1.3"/></svg>
<div class="t" style="left:61px;top:566px;font-size:14.5px;color:#434a54">6</div>
<div class="t" style="left:217px;top:566px;font-size:14.5px;color:#434a54">5</div>
<div class="t" style="left:297px;top:566px;font-size:14.5px;color:#434a54">23436628</div>
<div class="t" style="left:377px;top:566px;font-size:14.5px;color:#434a54">2021-03-08 <span style="font-size:13.6px">오전</span> 8:15</div>
<div class="t" style="left:526px;top:566px;font-size:14.5px;color:#434a54"><span style="font-size:13.6px">거래명세서확인요청</span></div>
<div class="t" style="left:662px;top:566px;font-size:14.5px;color:#434a54"><span style="font-size:13.6px">리오더</span></div>
<div class="t" style="left:742px;top:566px;font-size:14.5px;color:#434a54">2021-03-20</div>
<div class="t" style="left:850px;top:566px;font-size:14.5px;color:#434a54"><span style="font-size:13.6px">덕평</span>1</div>
<div class="t" style="left:930px;top:566px;font-size:14.5px;color:#434a54"><span style="font-size:13.6px">이</span></div>
<div style="left:112px;top:522px;width:100px;height:100px"><svg width="100" height="100" viewBox="0 0 100 100"><defs><filter id="bl" x="-20%" y="-20%" width="140%" height="140%"><feGaussianBlur stdDeviation=".45"/></filter></defs><rect x="20.0" y="24" width="7" height="10" rx="3" fill="#f3f3f3" stroke="#e0e0e0" stroke-width=".5"/><rect x="18.0" y="34" width="11" height="10" fill="#a5a5a5"/><rect x="20.0" y="34" width="3" height="10" fill="#555"/><rect x="24.5" y="34" width="2" height="10" fill="#ddd"/><rect x="17.0" y="44" width="13" height="3" fill="#d0d0d0"/><rect x="15.0" y="48" width="19" height="30" rx="3" fill="#e4e4e4" filter="url(#bl)"/><rect x="14.0" y="47" width="19" height="30" rx="3" fill="#f2f2f2" stroke="#b8b8b8" stroke-width=".7"/><rect x="14.5" y="50" width="18" height="23" fill="#7cc85a" opacity=".6"/><rect x="16.0" y="51.5" width="15" height="20" fill="#fff"/><path d="M19.5 56H27.5M20.5 58H26.5M18.5 68H28.5" stroke="#999" stroke-width=".6"/><rect x="47.0" y="24" width="7" height="10" rx="3" fill="#f3f3f3" stroke="#e0e0e0" stroke-width=".5"/><rect x="45.0" y="34" width="11" height="10" fill="#a5a5a5"/><rect x="47.0" y="34" width="3" height="10" fill="#555"/><rect x="51.5" y="34" width="2" height="10" fill="#ddd"/><rect x="44.0" y="44" width="13" height="3" fill="#d0d0d0"/><rect x="42.0" y="48" width="19" height="30" rx="3" fill="#e4e4e4" filter="url(#bl)"/><rect x="41.0" y="47" width="19" height="30" rx="3" fill="#f2f2f2" stroke="#b8b8b8" stroke-width=".7"/><rect x="41.5" y="50" width="18" height="23" fill="#7cc85a" opacity=".6"/><rect x="43.0" y="51.5" width="15" height="20" fill="#fff"/><path d="M46.5 56H54.5M47.5 58H53.5M45.5 68H55.5" stroke="#999" stroke-width=".6"/><rect x="74.0" y="24" width="7" height="10" rx="3" fill="#f3f3f3" stroke="#e0e0e0" stroke-width=".5"/><rect x="72.0" y="34" width="11" height="10" fill="#a5a5a5"/><rect x="74.0" y="34" width="3" height="10" fill="#555"/><rect x="78.5" y="34" width="2" height="10" fill="#ddd"/><rect x="71.0" y="44" width="13" height="3" fill="#d0d0d0"/><rect x="69.0" y="48" width="19" height="30" rx="3" fill="#e4e4e4" filter="url(#bl)"/><rect x="68.0" y="47" width="19" height="30" rx="3" fill="#f2f2f2" stroke="#b8b8b8" stroke-width=".7"/><rect x="68.5" y="50" width="18" height="23" fill="#7cc85a" opacity=".6"/><rect x="70.0" y="51.5" width="15" height="20" fill="#fff"/><path d="M73.5 56H81.5M74.5 58H80.5M72.5 68H82.5" stroke="#999" stroke-width=".6"/></svg></div>
<div style="left:0;top:722px;width:942px;height:1px;background:#a0a0a0"></div>
<div style="left:22px;top:666px;width:13px;height:13px;border:1px solid #333;background:#fff"></div>
<svg style="position:absolute;left:24px;top:668px" width="10" height="10" viewBox="0 0 10 10"><path d="M0 4L2.7 7 8.4 1.2" fill="none" stroke="#333" stroke-width="1.3"/></svg>
<div class="t" style="left:61px;top:666px;font-size:14.5px;color:#434a54">7</div>
<div class="t" style="left:217px;top:666px;font-size:14.5px;color:#434a54">5</div>
<div class="t" style="left:297px;top:666px;font-size:14.5px;color:#434a54">23436628</div>
<div class="t" style="left:377px;top:666px;font-size:14.5px;color:#434a54">2021-03-08 <span style="font-size:13.6px">오전</span> 8:15</div>
<div class="t" style="left:526px;top:666px;font-size:14.5px;color:#434a54"><span style="font-size:13.6px">거래명세서확인요청</span></div>
<div class="t" style="left:662px;top:666px;font-size:14.5px;color:#434a54"><span style="font-size:13.6px">리오더</span></div>
<div class="t" style="left:742px;top:666px;font-size:14.5px;color:#434a54">2021-03-20</div>
<div class="t" style="left:850px;top:666px;font-size:14.5px;color:#434a54"><span style="font-size:13.6px">덕평</span>1</div>
<div class="t" style="left:930px;top:666px;font-size:14.5px;color:#434a54"><span style="font-size:13.6px">이</span></div>
<div style="left:112px;top:622px;width:100px;height:100px"><svg width="100" height="100" viewBox="0 0 100 100"><defs><filter id="bl" x="-20%" y="-20%" width="140%" height="140%"><feGaussianBlur stdDeviation=".45"/></filter></defs><rect x="20.0" y="24" width="7" height="10" rx="3" fill="#f3f3f3" stroke="#e0e0e0" stroke-width=".5"/><rect x="18.0" y="34" width="11" height="10" fill="#a5a5a5"/><rect x="20.0" y="34" width="3" height="10" fill="#555"/><rect x="24.5" y="34" width="2" height="10" fill="#ddd"/><rect x="17.0" y="44" width="13" height="3" fill="#d0d0d0"/><rect x="15.0" y="48" width="19" height="30" rx="3" fill="#e4e4e4" filter="url(#bl)"/><rect x="14.0" y="47" width="19" height="30" rx="3" fill="#f2f2f2" stroke="#b8b8b8" stroke-width=".7"/><rect x="14.5" y="50" width="18" height="23" fill="#b0bca8" opacity=".6"/><rect x="16.0" y="51.5" width="15" height="20" fill="#fff"/><path d="M19.5 56H27.5M20.5 58H26.5M18.5 68H28.5" stroke="#999" stroke-width=".6"/><rect x="47.0" y="24" width="7" height="10" rx="3" fill="#f3f3f3" stroke="#e0e0e0" stroke-width=".5"/><rect x="45.0" y="34" width="11" height="10" fill="#a5a5a5"/><rect x="47.0" y="34" width="3" height="10" fill="#555"/><rect x="51.5" y="34" width="2" height="10" fill="#ddd"/><rect x="44.0" y="44" width="13" height="3" fill="#d0d0d0"/><rect x="42.0" y="48" width="19" height="30" rx="3" fill="#e4e4e4" filter="url(#bl)"/><rect x="41.0" y="47" width="19" height="30" rx="3" fill="#f2f2f2" stroke="#b8b8b8" stroke-width=".7"/><rect x="41.5" y="50" width="18" height="23" fill="#b0bca8" opacity=".6"/><rect x="43.0" y="51.5" width="15" height="20" fill="#fff"/><path d="M46.5 56H54.5M47.5 58H53.5M45.5 68H55.5" stroke="#999" stroke-width=".6"/><rect x="74.0" y="24" width="7" height="10" rx="3" fill="#f3f3f3" stroke="#e0e0e0" stroke-width=".5"/><rect x="72.0" y="34" width="11" height="10" fill="#a5a5a5"/><rect x="74.0" y="34" width="3" height="10" fill="#555"/><rect x="78.5" y="34" width="2" height="10" fill="#ddd"/><rect x="71.0" y="44" width="13" height="3" fill="#d0d0d0"/><rect x="69.0" y="48" width="19" height="30" rx="3" fill="#e4e4e4" filter="url(#bl)"/><rect x="68.0" y="47" width="19" height="30" rx="3" fill="#f2f2f2" stroke="#b8b8b8" stroke-width=".7"/><rect x="68.5" y="50" width="18" height="23" fill="#b0bca8" opacity=".6"/><rect x="70.0" y="51.5" width="15" height="20" fill="#fff"/><path d="M73.5 56H81.5M74.5 58H80.5M72.5 68H82.5" stroke="#999" stroke-width=".6"/></svg></div>
<div style="left:0;top:822px;width:942px;height:1px;background:#a0a0a0"></div>
<div style="left:22px;top:766px;width:13px;height:13px;border:1px solid #333;background:#fff"></div>
<svg style="position:absolute;left:24px;top:768px" width="10" height="10" viewBox="0 0 10 10"><path d="M0 4L2.7 7 8.4 1.2" fill="none" stroke="#333" stroke-width="1.3"/></svg>
<div class="t" style="left:61px;top:766px;font-size:14.5px;color:#434a54">8</div>
<div class="t" style="left:217px;top:766px;font-size:14.5px;color:#434a54">5</div>
<div class="t" style="left:297px;top:766px;font-size:14.5px;color:#434a54">23436628</div>
<div class="t" style="left:377px;top:766px;font-size:14.5px;color:#434a54">2021-03-08 <span style="font-size:13.6px">오전</span> 8:15</div>
<div class="t" style="left:526px;top:766px;font-size:14.5px;color:#434a54"><span style="font-size:13.6px">거래명세서확인요청</span></div>
<div class="t" style="left:662px;top:766px;font-size:14.5px;color:#434a54"><span style="font-size:13.6px">리오더</span></div>
<div class="t" style="left:742px;top:766px;font-size:14.5px;color:#434a54">2021-03-20</div>
<div class="t" style="left:850px;top:766px;font-size:14.5px;color:#434a54"><span style="font-size:13.6px">덕평</span>1</div>
<div class="t" style="left:930px;top:766px;font-size:14.5px;color:#434a54"><span style="font-size:13.6px">이</span></div>
<div style="left:112px;top:722px;width:100px;height:100px"><svg width="100" height="100" viewBox="0 0 100 100"><defs><filter id="bl" x="-20%" y="-20%" width="140%" height="140%"><feGaussianBlur stdDeviation=".45"/></filter></defs><rect x="20.0" y="24" width="7" height="10" rx="3" fill="#f3f3f3" stroke="#e0e0e0" stroke-width=".5"/><rect x="18.0" y="34" width="11" height="10" fill="#a5a5a5"/><rect x="20.0" y="34" width="3" height="10" fill="#555"/><rect x="24.5" y="34" width="2" height="10" fill="#ddd"/><rect x="17.0" y="44" width="13" height="3" fill="#d0d0d0"/><rect x="15.0" y="48" width="19" height="30" rx="3" fill="#e4e4e4" filter="url(#bl)"/><rect x="14.0" y="47" width="19" height="30" rx="3" fill="#f2f2f2" stroke="#b8b8b8" stroke-width=".7"/><rect x="14.5" y="50" width="18" height="23" fill="#c85a6a" opacity=".6"/><rect x="16.0" y="51.5" width="15" height="20" fill="#fff"/><path d="M19.5 56H27.5M20.5 58H26.5M18.5 68H28.5" stroke="#999" stroke-width=".6"/><rect x="47.0" y="24" width="7" height="10" rx="3" fill="#f3f3f3" stroke="#e0e0e0" stroke-width=".5"/><rect x="45.0" y="34" width="11" height="10" fill="#a5a5a5"/><rect x="47.0" y="34" width="3" height="10" fill="#555"/><rect x="51.5" y="34" width="2" height="10" fill="#ddd"/><rect x="44.0" y="44" width="13" height="3" fill="#d0d0d0"/><rect x="42.0" y="48" width="19" height="30" rx="3" fill="#e4e4e4" filter="url(#bl)"/><rect x="41.0" y="47" width="19" height="30" rx="3" fill="#f2f2f2" stroke="#b8b8b8" stroke-width=".7"/><rect x="41.5" y="50" width="18" height="23" fill="#c85a6a" opacity=".6"/><rect x="43.0" y="51.5" width="15" height="20" fill="#fff"/><path d="M46.5 56H54.5M47.5 58H53.5M45.5 68H55.5" stroke="#999" stroke-width=".6"/><rect x="74.0" y="24" width="7" height="10" rx="3" fill="#f3f3f3" stroke="#e0e0e0" stroke-width=".5"/><rect x="72.0" y="34" width="11" height="10" fill="#a5a5a5"/><rect x="74.0" y="34" width="3" height="10" fill="#555"/><rect x="78.5" y="34" width="2" height="10" fill="#ddd"/><rect x="71.0" y="44" width="13" height="3" fill="#d0d0d0"/><rect x="69.0" y="48" width="19" height="30" rx="3" fill="#e4e4e4" filter="url(#bl)"/><rect x="68.0" y="47" width="19" height="30" rx="3" fill="#f2f2f2" stroke="#b8b8b8" stroke-width=".7"/><rect x="68.5" y="50" width="18" height="23" fill="#c85a6a" opacity=".6"/><rect x="70.0" y="51.5" width="15" height="20" fill="#fff"/><path d="M73.5 56H81.5M74.5 58H80.5M72.5 68H82.5" stroke="#999" stroke-width=".6"/></svg></div>
</div>
<div style="left:165px;top:169px;width:942px;height:1px;background:#d8d8d8"></div>
<div style="left:165px;top:169px;width:1px;height:23px;background:#d8d8d8"></div>
<div style="left:165px;top:192px;width:1px;height:752px;background:#a8a8a8"></div>
<div style="left:1107px;top:169px;width:15px;height:775px;background:#f0f0f0"></div>
<div style="left:1107px;top:186px;width:15px;height:17px;background:#cdcdcd"></div>
<svg style="position:absolute;left:1110px;top:173px" width="10" height="8" viewBox="0 0 10 8"><path d="M1.2 6.5L5 2.7 8.8 6.5" fill="none" stroke="#606060" stroke-width="2"/></svg>
<svg style="position:absolute;left:1110px;top:930px" width="10" height="8" viewBox="0 0 10 8"><path d="M1.2 1.5L5 5.3 8.8 1.5" fill="none" stroke="#606060" stroke-width="2"/></svg>
<div style="left:165px;top:944px;width:957px;height:15px;background:#f0f0f0"></div>
<div style="left:182px;top:944px;width:515px;height:15px;background:#cdcdcd"></div>
<svg style="position:absolute;left:169px;top:947px" width="8" height="10" viewBox="0 0 8 10"><path d="M6.5 1.2L2.7 5 6.5 8.8" fill="none" stroke="#606060" stroke-width="2"/></svg>
<svg style="position:absolute;left:1094px;top:947px" width="8" height="10" viewBox="0 0 8 10"><path d="M1.5 1.2L5.3 5 1.5 8.8" fill="none" stroke="#606060" stroke-width="2"/></svg>
<div style="left:1137px;top:31px;width:378px;height:943px;background:#f0f0f0"></div>
<div style="left:1137px;top:38px;width:378px;height:1px;background:#d9d9d9"></div>
<div style="left:1140px;top:55px;width:372px;height:130px;border:1px solid #dcdcdc"></div>
<svg style="position:absolute;left:1143px;top:86px" width="366" height="75" viewBox="0 0 366 75">
<rect width="366" height="75" fill="#ff6b40"/>
<path d="M12 0L34 15.6L15 0z" fill="#ffb020"/>
<path d="M31 0L41.3 11.3L33 0z" fill="#fff" opacity=".7"/>
<path d="M0 11.5L39.6 31.7L0 16z" fill="#e24a2b"/>
<path d="M0 30.5L19 36.8L0 33.6z" fill="#fff" opacity=".9"/>
<path d="M0 63L33.6 52.2L0 68z" fill="#e24a2b"/>
<path d="M9 75L28.5 64.1L12 75z" fill="#fff" opacity=".7"/>
<path d="M26 75L32 71L28 75z" fill="#ffb020"/>
<path d="M357 0L322.3 21.5L361 0z" fill="#ffb020"/>
<path d="M332.5 0L319 12.2L334.5 0z" fill="#fff" opacity=".5"/>
<path d="M365.8 7.5L336.8 26.7L365.8 10.5z" fill="#fff" opacity=".75"/>
<path d="M365.8 22L331.7 38.6L365.8 26z" fill="#e24a2b"/>
<path d="M365.8 60.5L339.4 58.2L365.8 63.5z" fill="#fff" opacity=".85"/>
<path d="M365.8 72L322.3 62.4L365.8 75z" fill="#e24a2b"/>
<path d="M42.5 16.5l4-3 0.5 5z" fill="#d84a30"/>
<path d="M41.7 15.6L45.5 13L45.9 17.7z" fill="#fff"/>
<path d="M45 31.5L51.6 35.7L45 38.3z" fill="#d84a30"/>
<path d="M44.2 30.5L50.6 34.7L44.2 37.3z" fill="#6ef0c8"/>
<path d="M27.5 47L30.5 45L31 48z" fill="#d84a30"/>
<path d="M26.8 46.2L29.8 44.5L30.2 47.5z" fill="#fff"/>
<path d="M47.8 64.2L50 62.5L50.8 65.5z" fill="#d84a30"/>
<path d="M47.1 63.5L49.2 61.8L50 64.8z" fill="#ffee20"/>
<path d="M311 24.2L317.8 26.4L314 30.2z" fill="#d84a30"/>
<path d="M310 23.2L316.8 25.4L313 29.2z" fill="#ffee00"/>
<path d="M325.7 37.7L330 36.4L328.3 40.6z" fill="#d84a30"/>
<path d="M324.9 36.9L329.2 35.6L327.5 39.8z" fill="#fff"/>
<path d="M313 53.8L317 56L313 58.1z" fill="#d84a30"/>
<path d="M312.1 53L316 55.2L312.1 57.3z" fill="#6ef0c8"/>
<path d="M330.9 51.3L333.4 51.8L332.1 53z" fill="#ffee00"/>
</svg>
<div class="t" style="left:1259px;top:95px;font-size:11.5px;font-weight:bold;transform:scaleX(.85);transform-origin:0 0"><span style="color:#86f0c3">마케팅</span><span style="color:#fff;font-weight:normal"> 또는 </span><span style="color:#86f0c3">웹 데이터 수집</span><span style="color:#fff;font-weight:normal"> 등</span></div>
<div class="t" style="left:1277px;top:109px;font-size:11.5px;font-weight:bold;transform:scaleX(.87);transform-origin:0 0"><span style="color:#86f0c3">프로그램 문의</span><span style="color:#fff;font-weight:normal">하세요!</span></div>
<div class="t" style="left:1224px;top:126px;font-size:7.6px;color:#111;transform:scaleX(.95);transform-origin:0 0"><b>vb6.0</b> 및 <b>vba</b><span style="font-size:6.5px">(엑셀)</span><b>+vb.net</b> 프로그램 저렴하게 제작해드립니다.</div>
<div style="left:1287px;top:140px;width:76px;height:15px;background:#111;border-radius:8px"></div>
<div class="t" style="left:1295px;top:143px;font-size:7.5px;color:#fff;transform:scaleX(.9);transform-origin:0 0">문의 - <span style="color:#ffe35a">카톡 : vbnvba</span></div>
<div style="left:1140px;top:186px;width:372px;height:784px;background:#fff;border:1px solid #828790"></div>
<div style="left:1142px;top:920px;width:367px;height:12px;background:#0078d7"></div>
<div class="t" style="left:1144px;top:198px;font-size:11px;line-height:12px;color:#000;word-spacing:2px;transform:scaleY(1.2);transform-origin:0 0"><span style="letter-spacing:2.2px">-----</span> <span style="font-size:11.7px">도움</span> <span style="font-size:11.7px">주신</span> <span style="font-size:11.7px">분들</span> <span style="letter-spacing:2.2px">-----</span></div>
<div class="t" style="left:1144px;top:210px;font-size:11px;line-height:12px;color:#000;word-spacing:2px;transform:scaleY(1.2);transform-origin:0 0">2019.10.01 <span style="font-size:11.7px">올투그린</span> - <span style="font-size:11.7px">제안</span></div>
<div class="t" style="left:1144px;top:222px;font-size:11px;line-height:12px;color:#000;word-spacing:2px;transform:scaleY(1.2);transform-origin:0 0">2019.11.01 <span style="font-size:11.7px">무료배포</span> v1</div>
<div class="t" style="left:1144px;top:234px;font-size:11px;line-height:12px;color:#000;word-spacing:2px;transform:scaleY(1.2);transform-origin:0 0">2019.12.03 <span style="font-size:11.7px">일부</span> <span style="font-size:11.7px">기능</span> <span style="font-size:11.7px">업데이트</span></div>
<div class="t" style="left:1144px;top:258px;font-size:11px;line-height:12px;color:#000;word-spacing:2px;transform:scaleY(1.2);transform-origin:0 0">2020.03.06 '(<span style="font-size:11.7px">주</span>)<span style="font-size:11.7px">성은</span>' - <span style="font-size:11.7px">오류</span> <span style="font-size:11.7px">수정요청</span></div>
<div class="t" style="left:1144px;top:282px;font-size:11px;line-height:12px;color:#000;word-spacing:2px;transform:scaleY(1.2);transform-origin:0 0">2020.03.06 <span style="font-size:11.7px">일부</span> <span style="font-size:11.7px">기능</span> <span style="font-size:11.7px">업데이트</span> <span style="font-size:11.7px">및</span> <span style="font-size:11.7px">검색</span> <span style="font-size:11.7px">기능</span> <span style="font-size:11.7px">추가</span></div>
<div class="t" style="left:1204px;top:294px;font-size:11px;line-height:12px;color:#000;word-spacing:2px;transform:scaleY(1.2);transform-origin:0 0">- <span style="font-size:11.7px">항목</span> <span style="font-size:11.7px">순서</span> <span style="font-size:11.7px">변경</span>(<span style="font-size:11.7px">엑셀</span> <span style="font-size:11.7px">변환</span> <span style="font-size:11.7px">미적용</span>)</div>
<div class="t" style="left:1144px;top:318px;font-size:11px;line-height:12px;color:#000;word-spacing:2px;transform:scaleY(1.2);transform-origin:0 0">2020.03.07 <span style="font-size:11.7px">기능</span> <span style="font-size:11.7px">추가</span> <span style="font-size:11.7px">및</span> <span style="font-size:11.7px">개선</span></div>
<div class="t" style="left:1177px;top:330px;font-size:11px;line-height:12px;color:#000;word-spacing:2px;transform:scaleY(1.2);transform-origin:0 0">1. <span style="font-size:11.7px">항목</span> <span style="font-size:11.7px">순서와</span> <span style="font-size:11.7px">똑같이</span> <span style="font-size:11.7px">엑셀</span> <span style="font-size:11.7px">변환</span></div>
<div class="t" style="left:1177px;top:342px;font-size:11px;line-height:12px;color:#000;word-spacing:2px;transform:scaleY(1.2);transform-origin:0 0">2. <span style="font-size:11.7px">이전</span> <span style="font-size:11.7px">데이터</span> <span style="font-size:11.7px">저장</span> <span style="font-size:11.7px">및</span> <span style="font-size:11.7px">불러들임</span>(<span style="font-size:11.7px">종료</span> <span style="font-size:11.7px">시</span>, <span style="font-size:11.7px">시작</span> <span style="font-size:11.7px">시</span>)</div>
<div class="t" style="left:1177px;top:354px;font-size:11px;line-height:12px;color:#000;word-spacing:2px;transform:scaleY(1.2);transform-origin:0 0">3. <span style="font-size:11.7px">항목</span> <span style="font-size:11.7px">순서</span> <span style="font-size:11.7px">변경</span> <span style="font-size:11.7px">개선</span></div>
<div class="t" style="left:1177px;top:366px;font-size:11px;line-height:12px;color:#000;word-spacing:2px;transform:scaleY(1.2);transform-origin:0 0">4. <span style="font-size:11.7px">보기</span>/<span style="font-size:11.7px">안</span> <span style="font-size:11.7px">보기</span> <span style="font-size:11.7px">추가</span></div>
<div class="t" style="left:1177px;top:378px;font-size:11px;line-height:12px;color:#000;word-spacing:2px;transform:scaleY(1.2);transform-origin:0 0">5. <span style="font-size:11.7px">엑셀</span> <span style="font-size:11.7px">변환</span> <span style="font-size:11.7px">개선</span></div>
<div class="t" style="left:1177px;top:390px;font-size:11px;line-height:12px;color:#000;word-spacing:2px;transform:scaleY(1.2);transform-origin:0 0">6. <span style="font-size:11.7px">상세</span> <span style="font-size:11.7px">리스트</span> <span style="font-size:11.7px">크롤링에서</span> <span style="font-size:11.7px">엑셀</span> <span style="font-size:11.7px">파싱으로</span> <span style="font-size:11.7px">변경</span></div>
<div class="t" style="left:1177px;top:402px;font-size:11px;line-height:12px;color:#000;word-spacing:2px;transform:scaleY(1.2);transform-origin:0 0">7. <span style="font-size:11.7px">리스트내</span> <span style="font-size:11.7px">날짜검색</span> <span style="font-size:11.7px">추가</span></div>
<div class="t" style="left:1144px;top:426px;font-size:11px;line-height:12px;color:#000;word-spacing:2px;transform:scaleY(1.2);transform-origin:0 0">2020.05.20 <span style="font-size:11.7px">기능</span> <span style="font-size:11.7px">추가</span> <span style="font-size:11.7px">및</span> <span style="font-size:11.7px">개선</span></div>
<div class="t" style="left:1177px;top:438px;font-size:11px;line-height:12px;color:#000;word-spacing:2px;transform:scaleY(1.2);transform-origin:0 0">1. <span style="font-size:11.7px">기존</span> <span style="font-size:11.7px">웹크롤링</span> <span style="font-size:11.7px">방식</span> <span style="font-size:11.7px">오류</span> <span style="font-size:11.7px">개선</span></div>
<div class="t" style="left:1177px;top:450px;font-size:11px;line-height:12px;color:#000;word-spacing:2px;transform:scaleY(1.2);transform-origin:0 0">2. <span style="font-size:11.7px">정산</span> <span style="font-size:11.7px">페이지</span> <span style="font-size:11.7px">가져오기</span> <span style="font-size:11.7px">추가</span></div>
<div class="t" style="left:1144px;top:474px;font-size:11px;line-height:12px;color:#000;word-spacing:2px;transform:scaleY(1.2);transform-origin:0 0">2020.05.25 <span style="font-size:11.7px">기능</span> <span style="font-size:11.7px">추가</span> <span style="font-size:11.7px">및</span> <span style="font-size:11.7px">개선</span></div>
<div class="t" style="left:1177px;top:486px;font-size:11px;line-height:12px;color:#000;word-spacing:2px;transform:scaleY(1.2);transform-origin:0 0">1. <span style="font-size:11.7px">정산페이지</span> <span style="font-size:11.7px">검색기능</span> <span style="font-size:11.7px">추가</span></div>
<div class="t" style="left:1189px;top:498px;font-size:11px;line-height:12px;color:#000;word-spacing:2px;transform:scaleY(1.2);transform-origin:0 0">- <span style="font-size:11.7px">추가의견</span> <span style="font-size:11.7px">반영예정</span></div>
<div class="t" style="left:1144px;top:522px;font-size:11px;line-height:12px;color:#000;word-spacing:2px;transform:scaleY(1.2);transform-origin:0 0">2020.07.24 <span style="font-size:11.7px">위어스</span>(WEUS) <span style="font-size:11.7px">백</span>** <span style="font-size:11.7px">대표님</span> <span style="font-size:11.7px">오류</span> <span style="font-size:11.7px">수정요청</span> <span style="font-size:11.7px">반영</span></div>
<div class="t" style="left:1177px;top:534px;font-size:11px;line-height:12px;color:#000;word-spacing:2px;transform:scaleY(1.2);transform-origin:0 0">1. <span style="font-size:11.7px">항목</span> <span style="font-size:11.7px">순서</span> <span style="font-size:11.7px">적용</span> <span style="font-size:11.7px">안</span> <span style="font-size:11.7px">될</span> <span style="font-size:11.7px">현상</span> <span style="font-size:11.7px">수정</span></div>
<div class="t" style="left:1144px;top:558px;font-size:11px;line-height:12px;color:#000;word-spacing:2px;transform:scaleY(1.2);transform-origin:0 0">2020.08.11 <span style="font-size:11.7px">위어스</span>(WEUS) <span style="font-size:11.7px">백</span>** <span style="font-size:11.7px">대표님</span> <span style="font-size:11.7px">오류</span> <span style="font-size:11.7px">수정요청</span> <span style="font-size:11.7px">반영</span></div>
<div class="t" style="left:1177px;top:570px;font-size:11px;line-height:12px;color:#000;word-spacing:2px;transform:scaleY(1.2);transform-origin:0 0">1. <span style="font-size:11.7px">설정값</span> <span style="font-size:11.7px">저장</span> <span style="font-size:11.7px">안</span> <span style="font-size:11.7px">될</span> <span style="font-size:11.7px">현상</span> <span style="font-size:11.7px">수정</span></div>
<div class="t" style="left:1177px;top:582px;font-size:11px;line-height:12px;color:#000;word-spacing:2px;transform:scaleY(1.2);transform-origin:0 0">2. <span style="font-size:11.7px">기타</span> <span style="font-size:11.7px">설정관련</span> INI Class <span style="font-size:11.7px">다수</span> <span style="font-size:11.7px">수정</span></div>
<div class="t" style="left:1144px;top:606px;font-size:11px;line-height:12px;color:#000;word-spacing:2px;transform:scaleY(1.2);transform-origin:0 0">2020.10.03 <span style="font-size:11.7px">디자인</span> <span style="font-size:11.7px">및</span> <span style="font-size:11.7px">레이아웃</span> <span style="font-size:11.7px">변경</span></div>
<div class="t" style="left:1177px;top:618px;font-size:11px;line-height:12px;color:#000;word-spacing:2px;transform:scaleY(1.2);transform-origin:0 0">1. <span style="font-size:11.7px">디자인</span> <span style="font-size:11.7px">수정</span></div>
<div class="t" style="left:1177px;top:630px;font-size:11px;line-height:12px;color:#000;word-spacing:2px;transform:scaleY(1.2);transform-origin:0 0">2. <span style="font-size:11.7px">엑셀변환</span> <span style="font-size:11.7px">기능추가</span></div>
<div class="t" style="left:1144px;top:654px;font-size:11px;line-height:12px;color:#000;word-spacing:2px;transform:scaleY(1.2);transform-origin:0 0">2021.05.30 <span style="font-size:11.7px">바코드</span> <span style="font-size:11.7px">프린트</span> <span style="font-size:11.7px">추가</span></div>
<div class="t" style="left:1177px;top:666px;font-size:11px;line-height:12px;color:#000;word-spacing:2px;transform:scaleY(1.2);transform-origin:0 0">1. 60mm x 30mm <span style="font-size:11.7px">바코드</span> <span style="font-size:11.7px">추가</span></div>
<div class="t" style="left:1177px;top:678px;font-size:11px;line-height:12px;color:#000;word-spacing:2px;transform:scaleY(1.2);transform-origin:0 0">2. <span style="font-size:11.7px">엑셀변환</span> <span style="font-size:11.7px">기능수정</span></div>
<div class="t" style="left:1177px;top:690px;font-size:11px;line-height:12px;color:#000;word-spacing:2px;transform:scaleY(1.2);transform-origin:0 0">3. <span style="font-size:11.7px">상세리스트</span> <span style="font-size:11.7px">이미지</span> <span style="font-size:11.7px">보기</span> <span style="font-size:11.7px">추가</span></div>
<div class="t" style="left:1189px;top:702px;font-size:11px;line-height:12px;color:#000;word-spacing:2px;transform:scaleY(1.2);transform-origin:0 0">- <span style="font-size:11.7px">이미지</span> <span style="font-size:11.7px">내문서</span> <span style="font-size:11.7px">경로에</span> <span style="font-size:11.7px">저장하여</span> <span style="font-size:11.7px">로딩속도</span> <span style="font-size:11.7px">개선</span></div>
<div class="t" style="left:1144px;top:750px;font-size:11px;line-height:12px;color:#000;word-spacing:2px;transform:scaleY(1.2);transform-origin:0 0"><span style="letter-spacing:2.2px">-----</span> <span style="font-size:11.7px">프로그램</span> <span style="font-size:11.7px">시작</span> <span style="letter-spacing:2.2px">-----</span></div>
<div class="t" style="left:1144px;top:774px;font-size:11px;line-height:12px;color:#000;word-spacing:2px;transform:scaleY(1.2);transform-origin:0 0"><span style="font-size:11.7px">로딩중</span>...</div>
<div class="t" style="left:1144px;top:810px;font-size:11px;line-height:12px;color:#000;word-spacing:2px;transform:scaleY(1.2);transform-origin:0 0"><span style="font-size:11.7px">로그인</span> <span style="font-size:11.7px">성공</span></div>
<div class="t" style="left:1144px;top:834px;font-size:11px;line-height:12px;color:#000;word-spacing:2px;transform:scaleY(1.2);transform-origin:0 0"><span style="font-size:11.7px">설정을</span> <span style="font-size:11.7px">불러오고</span> <span style="font-size:11.7px">있습니다</span>.</div>
<div class="t" style="left:1144px;top:858px;font-size:11px;line-height:12px;color:#000;word-spacing:2px;transform:scaleY(1.2);transform-origin:0 0"><span style="font-size:11.7px">리스트를</span> <span style="font-size:11.7px">보기</span> <span style="font-size:11.7px">좋게</span> <span style="font-size:11.7px">정리합니다</span>.</div>
<div class="t" style="left:1144px;top:882px;font-size:11px;line-height:12px;color:#000;word-spacing:2px;transform:scaleY(1.2);transform-origin:0 0"><span style="font-size:11.7px">이미지를</span> <span style="font-size:11.7px">불러옵니다</span>.</div>
<div class="t" style="left:1144px;top:894px;font-size:11px;line-height:12px;color:#000;word-spacing:2px;transform:scaleY(1.2);transform-origin:0 0"><span style="font-size:11.7px">기간</span> 2021.04.28 ~ 2021.07.19 : <span style="font-size:11.7px">지급예정금액</span> : 16,928,846<span style="font-size:11.7px">원</span></div>
<div class="t" style="left:1144px;top:919px;font-size:11px;line-height:12px;color:#fff;word-spacing:2px;transform:scaleY(1.2);transform-origin:0 0"><span style="font-size:11.7px">이제</span> <span style="font-size:11.7px">사용하셔도</span> <span style="font-size:11.7px">좋습니다</span>.</div>
<div style="left:671px;top:339px;width:151px;height:254px;background:#fcfcfc;border:1px solid #979797;box-shadow:2px 2px 3px rgba(0,0,0,.35)"></div>
<div style="left:672px;top:340px;width:24px;height:252px;background:linear-gradient(90deg,#fcfcfc,#f1f1f1 60%,#e9e9e9)"></div>
<div class="t" style="left:707px;top:345px;font-size:12px;color:#000">전체 선택</div>
<div class="t" style="left:707px;top:367px;font-size:12px;color:#000">선택 반전</div>
<div class="t" style="left:707px;top:389px;font-size:12px;color:#000">모두 해제</div>
<div class="t" style="left:707px;top:411px;font-size:12px;color:#000">선택 삭제</div>
<div class="t" style="left:707px;top:439px;font-size:12px;color:#000">선택 검색</div>
<div class="t" style="left:707px;top:467px;font-size:12px;color:#000">Excel 변환</div>
<div class="t" style="left:707px;top:495px;font-size:12px;color:#000">카카오톡 상담</div>
<div class="t" style="left:707px;top:523px;font-size:12px;color:#000">항목 순서변경</div>
<div class="t" style="left:707px;top:545px;font-size:12px;color:#000">보기설정</div>
<div style="left:704px;top:432px;width:116px;height:1px;background:#bdbdbd"></div>
<div style="left:704px;top:460px;width:116px;height:1px;background:#bdbdbd"></div>
<div style="left:704px;top:488px;width:116px;height:1px;background:#bdbdbd"></div>
<div style="left:704px;top:516px;width:116px;height:1px;background:#bdbdbd"></div>
<div style="left:704px;top:566px;width:116px;height:1px;background:#bdbdbd"></div>
<div style="left:673px;top:569px;width:147px;height:23px;background:#b9d8f5;border:1px solid #3c8fdc"></div>
<div class="t" style="left:707px;top:574px;font-size:12px;color:#000">바코드 출력</div>
<svg style="position:absolute;left:805px;top:577px" width="6" height="8" viewBox="0 0 6 8"><path d="M0 0L5 4L0 8z" fill="#000"/></svg>
<div style="left:822px;top:569px;width:98px;height:48px;background:#fcfcfc;border:1px solid #979797;box-shadow:2px 2px 3px rgba(0,0,0,.35)"></div>
<div style="left:823px;top:594px;width:23px;height:22px;background:linear-gradient(90deg,#fcfcfc,#f1f1f1 60%,#e9e9e9)"></div>
<div style="left:823px;top:571px;width:95px;height:22px;background:#b9d8f5;border:1px solid #3c8fdc"></div>
<div class="t" style="left:857px;top:575px;font-size:12px;color:#000">지정</div>
<svg style="position:absolute;left:904px;top:579px" width="6" height="8" viewBox="0 0 6 8"><path d="M0 0L5 4L0 8z" fill="#000"/></svg>
<div class="t" style="left:857px;top:597px;font-size:12px;color:#000">전체</div>
<div style="left:920px;top:571px;width:160px;height:29px;background:#fcfcfc;border:1px solid #979797;box-shadow:2px 2px 3px rgba(0,0,0,.35)"></div>
<div style="left:921px;top:572px;width:23px;height:27px;background:linear-gradient(90deg,#fcfcfc,#f1f1f1 60%,#e9e9e9)"></div>
<div style="left:953px;top:574px;width:100px;height:23px;background:#fff;border:1px solid #0078d7"></div>
<div class="t" style="left:956px;top:579px;font-size:12px;color:#000">2</div>
<div style="left:963px;top:578px;width:1px;height:15px;background:#000"></div>
</body></html>
